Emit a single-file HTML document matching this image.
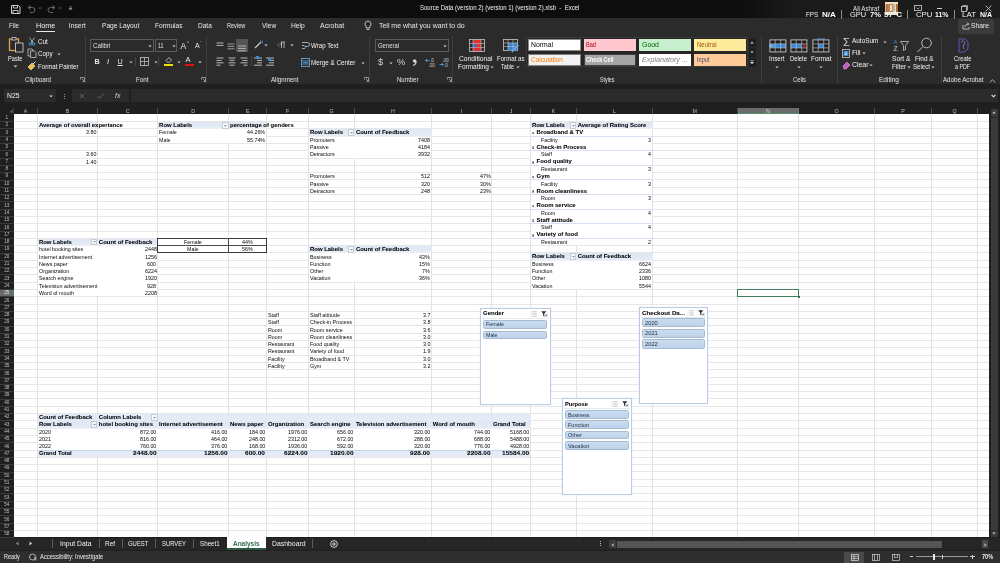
<!DOCTYPE html>
<html><head><meta charset="utf-8"><style>
html,body{margin:0;padding:0;width:1000px;height:563px;overflow:hidden;background:#2b2b2b;position:relative}
.a{position:absolute;box-sizing:border-box}
.t{white-space:pre;line-height:10px;font-family:"Liberation Sans",sans-serif;transform-origin:0 0}
svg.a{overflow:visible}
</style></head><body>
<div class="a" style="left:0.00px;top:0.00px;width:1000.00px;height:18.00px;background:#0d0d0d;"></div>
<div class="a" style="left:740.00px;top:0.00px;width:260.00px;height:18.00px;background:linear-gradient(90deg, rgba(13,13,13,0) 0px, #1a1a1a 50px, #1c1c1c 100%);"></div>
<div class="a" style="left:0.00px;top:18.00px;width:1000.00px;height:66.00px;background:#2b2b2b;"></div>
<div class="a" style="left:0.00px;top:84.00px;width:1000.00px;height:30.00px;background:#1f1f1f;"></div>
<div class="a" style="left:0.00px;top:536.20px;width:1000.00px;height:14.60px;background:#262626;"></div>
<div class="a" style="left:0.00px;top:536.90px;width:1000.00px;height:1.10px;background:#1c1c1c;"></div>
<div class="a" style="left:0.00px;top:549.90px;width:1000.00px;height:0.90px;background:#1f1f1f;"></div>
<div class="a" style="left:0.00px;top:550.80px;width:1000.00px;height:12.20px;background:#2e2e2e;"></div>
<svg class="a" style="left:10px;top:4px" width="11" height="11" viewBox="0 0 11 11"><path d="M1.5 1.5h7l1.5 1.5v6.5h-8.5z" fill="none" stroke="#cfcfcf" stroke-width="1"/><path d="M3.5 1.5v2.5h4v-2.5M3 9.5v-3h5v3" fill="none" stroke="#cfcfcf" stroke-width="0.9"/></svg>
<svg class="a" style="left:25px;top:4px" width="12" height="11" viewBox="0 0 12 11"><path d="M4 3.5h3.5a2.5 2.5 0 0 1 0 5H5" fill="none" stroke="#6a6a6a" stroke-width="1"/><path d="M5.5 1.5L3 3.5l2.5 2" fill="none" stroke="#6a6a6a" stroke-width="1"/></svg>
<svg class="a" style="left:38px;top:7px" width="4" height="3" viewBox="0 0 4 3"><path d="M0.5 1h3" stroke="#6a6a6a" stroke-width="0.8"/></svg>
<svg class="a" style="left:46px;top:4px" width="12" height="11" viewBox="0 0 12 11"><path d="M8 3.5H4.5a2.5 2.5 0 0 0 0 5H7" fill="none" stroke="#6a6a6a" stroke-width="1"/><path d="M6.5 1.5L9 3.5l-2.5 2" fill="none" stroke="#6a6a6a" stroke-width="1"/></svg>
<svg class="a" style="left:58px;top:7px" width="4" height="3" viewBox="0 0 4 3"><path d="M0.5 1h3" stroke="#6a6a6a" stroke-width="0.8"/></svg>
<svg class="a" style="left:68px;top:6px" width="5" height="5" viewBox="0 0 5 5"><path d="M1 1h3M1 2.5L2.5 4 4 2.5z" fill="#8a8a8a" stroke="#8a8a8a" stroke-width="0.8"/></svg>
<div class="a" style="left:885.10px;top:2.10px;width:12.90px;height:12.70px;background:#d9b48a;"></div>
<div class="a" style="left:885.10px;top:2.10px;width:12.90px;height:1.70px;background:#f0e0c8;"></div>
<div class="a" style="left:885.80px;top:4.00px;width:8.20px;height:7.80px;background:linear-gradient(90deg,#b8682e,#c98a50 40%,#8a7a60 70%,#d8c090);"></div>
<div class="a" style="left:889.50px;top:5.00px;width:2.50px;height:5.50px;background:#e8e0d8;"></div>
<div class="a" style="left:894.50px;top:3.80px;width:1.50px;height:8.20px;background:#e8d8a8;"></div>
<div class="a" style="left:896.00px;top:4.00px;width:2.00px;height:7.80px;background:#b06a28;"></div>
<div class="a" style="left:885.10px;top:11.80px;width:12.90px;height:3.00px;background:#ede2d0;"></div>
<div class="a" style="left:841.00px;top:9.50px;width:1.00px;height:9.50px;background:#8a8a8a;"></div>
<div class="a" style="left:907.20px;top:9.50px;width:1.00px;height:9.50px;background:#8a8a8a;"></div>
<div class="a" style="left:954.40px;top:9.50px;width:1.00px;height:9.50px;background:#8a8a8a;"></div>
<svg class="a" style="left:914px;top:5px" width="8" height="6" viewBox="0 0 8 6"><rect x="0.5" y="0.5" width="7" height="5" fill="none" stroke="#cfcfcf" stroke-width="0.8"/><path d="M2.5 2.5l1.5 1.5 1.5-1.5" fill="none" stroke="#cfcfcf" stroke-width="0.7"/></svg>
<div class="a" style="left:937.00px;top:7.50px;width:5.00px;height:0.80px;background:#cfcfcf;"></div>
<svg class="a" style="left:961px;top:4.5px" width="7" height="7" viewBox="0 0 7 7"><rect x="0.5" y="1.5" width="5" height="5" fill="none" stroke="#cfcfcf" stroke-width="0.8"/><path d="M1.8 1.5V0.5h4.7v4.7H5.5" fill="none" stroke="#cfcfcf" stroke-width="0.7"/></svg>
<svg class="a" style="left:985px;top:4.5px" width="7" height="7" viewBox="0 0 7 7"><path d="M0.5 0.5l6 6M6.5 0.5l-6 6" stroke="#cfcfcf" stroke-width="0.8"/></svg>
<div class="a" style="left:35.50px;top:30.60px;width:19.70px;height:1.40px;background:#e8e8e8;border-radius:1px"></div>
<svg class="a" style="left:364px;top:20px" width="8" height="11" viewBox="0 0 8 11"><path d="M4 1a3 3 0 0 0-1.8 5.4V8h3.6V6.4A3 3 0 0 0 4 1z" fill="none" stroke="#d0d0d0" stroke-width="0.9"/><path d="M2.6 9.5h2.8" stroke="#d0d0d0" stroke-width="0.9"/></svg>
<div class="a" style="left:958.00px;top:19.00px;width:35.70px;height:14.60px;background:#3b3b3b;border-radius:2px"></div>
<svg class="a" style="left:962px;top:22px" width="8" height="8" viewBox="0 0 8 8"><path d="M1 3v4h6V5" fill="none" stroke="#cfcfcf" stroke-width="0.8"/><path d="M3 5c0-2 1.5-3 3.5-3M5.2 0.8L6.8 2 5.2 3.4" fill="none" stroke="#cfcfcf" stroke-width="0.8"/></svg>
<div class="a" style="left:85.30px;top:36.00px;width:0.80px;height:47.00px;background:#3d3d3d;"></div>
<div class="a" style="left:205.50px;top:36.00px;width:0.80px;height:47.00px;background:#3d3d3d;"></div>
<div class="a" style="left:369.30px;top:36.00px;width:0.80px;height:47.00px;background:#3d3d3d;"></div>
<div class="a" style="left:452.30px;top:36.00px;width:0.80px;height:47.00px;background:#3d3d3d;"></div>
<div class="a" style="left:761.00px;top:36.00px;width:0.80px;height:47.00px;background:#3d3d3d;"></div>
<div class="a" style="left:837.30px;top:36.00px;width:0.80px;height:47.00px;background:#3d3d3d;"></div>
<div class="a" style="left:940.80px;top:36.00px;width:0.80px;height:47.00px;background:#3d3d3d;"></div>
<svg class="a" style="left:79.5px;top:77px" width="5" height="5" viewBox="0 0 5 5"><path d="M0.5 2.5V0.5h4v4h-2M2 2l2.5 2.5" fill="none" stroke="#bdbdbd" stroke-width="0.7"/></svg>
<svg class="a" style="left:200.5px;top:77px" width="5" height="5" viewBox="0 0 5 5"><path d="M0.5 2.5V0.5h4v4h-2M2 2l2.5 2.5" fill="none" stroke="#bdbdbd" stroke-width="0.7"/></svg>
<svg class="a" style="left:363.5px;top:77px" width="5" height="5" viewBox="0 0 5 5"><path d="M0.5 2.5V0.5h4v4h-2M2 2l2.5 2.5" fill="none" stroke="#bdbdbd" stroke-width="0.7"/></svg>
<svg class="a" style="left:446.5px;top:77px" width="5" height="5" viewBox="0 0 5 5"><path d="M0.5 2.5V0.5h4v4h-2M2 2l2.5 2.5" fill="none" stroke="#bdbdbd" stroke-width="0.7"/></svg>
<svg class="a" style="left:989px;top:79px" width="7" height="4" viewBox="0 0 7 4"><path d="M0.8 3.3L3.5 0.8l2.7 2.5" fill="none" stroke="#d0d0d0" stroke-width="0.8"/></svg>
<svg class="a" style="left:8px;top:36px" width="17" height="17" viewBox="0 0 17 17"><rect x="1.5" y="3" width="9" height="11.5" fill="none" stroke="#e0a050" stroke-width="1.3"/><rect x="4" y="1.5" width="4" height="2.5" fill="#2b2b2b" stroke="#c8c8c8" stroke-width="0.8"/><rect x="7.5" y="7" width="7.5" height="9" fill="#2b2b2b" stroke="#c8c8c8" stroke-width="0.9"/></svg>
<svg class="a" style="left:13px;top:65px" width="5" height="3" viewBox="0 0 5 3"><path d="M0.5 0.5L2.5 2.5 4.5 0.5z" fill="#c8c8c8"/></svg>
<svg class="a" style="left:28px;top:37px" width="8" height="9" viewBox="0 0 8 9"><path d="M1.5 0.5L5 6M6.5 0.5L3 6" stroke="#9fb7c8" stroke-width="0.9"/><circle cx="2.3" cy="7" r="1.3" fill="none" stroke="#3da3d9" stroke-width="0.9"/><circle cx="5.7" cy="7" r="1.3" fill="none" stroke="#3da3d9" stroke-width="0.9"/></svg>
<svg class="a" style="left:27px;top:48px" width="10" height="10" viewBox="0 0 10 10"><path d="M1 1h4l1 1v6H1z" fill="none" stroke="#c8c8c8" stroke-width="0.8"/><path d="M3.5 3h4l1.5 1.5V9.5H3.5z" fill="#2b2b2b" stroke="#c8c8c8" stroke-width="0.8"/></svg>
<svg class="a" style="left:57px;top:53px" width="4" height="3" viewBox="0 0 4 3"><path d="M0.3 0.5L2 2.3 3.7 0.5z" fill="#c8c8c8"/></svg>
<svg class="a" style="left:27px;top:61px" width="10" height="10" viewBox="0 0 10 10"><path d="M1 6l4-4 3 3-4 4z" fill="#f0c040" stroke="#e8e8e8" stroke-width="0.6"/><path d="M6 3l2.5-2.5" stroke="#e8e8e8" stroke-width="1"/></svg>
<div class="a" style="left:90.20px;top:39.10px;width:63.40px;height:12.80px;background:#2b2b2b;border:0.8px solid #5a5a5a"></div>
<svg class="a" style="left:148px;top:44.5px" width="4" height="3" viewBox="0 0 4 3"><path d="M0.3 0.5L2 2.3 3.7 0.5z" fill="#d0d0d0"/></svg>
<div class="a" style="left:155.00px;top:39.10px;width:22.40px;height:12.80px;background:#2b2b2b;border:0.8px solid #5a5a5a"></div>
<svg class="a" style="left:172px;top:44.5px" width="4" height="3" viewBox="0 0 4 3"><path d="M0.3 0.5L2 2.3 3.7 0.5z" fill="#d0d0d0"/></svg>
<svg class="a" style="left:128.5px;top:61px" width="4" height="3" viewBox="0 0 4 3"><path d="M0.3 0.5L2 2.3 3.7 0.5z" fill="#c8c8c8"/></svg>
<svg class="a" style="left:153.5px;top:61px" width="4" height="3" viewBox="0 0 4 3"><path d="M0.3 0.5L2 2.3 3.7 0.5z" fill="#c8c8c8"/></svg>
<svg class="a" style="left:177px;top:61px" width="4" height="3" viewBox="0 0 4 3"><path d="M0.3 0.5L2 2.3 3.7 0.5z" fill="#c8c8c8"/></svg>
<svg class="a" style="left:197.5px;top:61px" width="4" height="3" viewBox="0 0 4 3"><path d="M0.3 0.5L2 2.3 3.7 0.5z" fill="#c8c8c8"/></svg>
<div class="a" style="left:135.00px;top:56.50px;width:0.70px;height:9.50px;background:#444;"></div>
<svg class="a" style="left:140px;top:57px" width="9" height="9" viewBox="0 0 9 9"><rect x="0.5" y="0.5" width="8" height="8" fill="none" stroke="#c8c8c8" stroke-width="0.8"/><path d="M4.5 0.5v8M0.5 4.5h8" stroke="#c8c8c8" stroke-width="0.7"/></svg>
<div class="a" style="left:158.00px;top:56.50px;width:0.70px;height:9.50px;background:#444;"></div>
<svg class="a" style="left:164px;top:55.5px" width="9" height="9" viewBox="0 0 9 9"><path d="M2 4.5L5 1.5 7.5 4 4.5 7z" fill="none" stroke="#d0d0d0" stroke-width="0.8"/></svg>
<div class="a" style="left:163.50px;top:64.30px;width:9.50px;height:1.90px;background:#f0e000;"></div>
<div class="a" style="left:184.50px;top:64.30px;width:9.50px;height:1.90px;background:#e01010;"></div>
<svg class="a" style="left:215.5px;top:41.5px" width="10" height="10" viewBox="0 0 10 10"><path d="M0.5 1.0h7" stroke="#c8c8c8" stroke-width="0.9"/><path d="M0.5 3.4h7" stroke="#c8c8c8" stroke-width="0.9"/></svg>
<svg class="a" style="left:227px;top:43px" width="10" height="10" viewBox="0 0 10 10"><path d="M0.5 1.0h7" stroke="#a8a8a8" stroke-width="0.9"/><path d="M0.5 3.4h7" stroke="#a8a8a8" stroke-width="0.9"/><path d="M0.5 5.8h7" stroke="#a8a8a8" stroke-width="0.9"/></svg>
<div class="a" style="left:236.20px;top:39.10px;width:11.70px;height:12.80px;background:#555555;"></div>
<svg class="a" style="left:238px;top:45px" width="10" height="10" viewBox="0 0 10 10"><path d="M0 1.0h8" stroke="#bdbdbd" stroke-width="0.9"/><path d="M0 3.4h8" stroke="#bdbdbd" stroke-width="0.9"/><path d="M0 5.8h8" stroke="#bdbdbd" stroke-width="0.9"/></svg>
<svg class="a" style="left:215.5px;top:57px" width="10" height="10" viewBox="0 0 10 10"><path d="M0.5 1.0h7" stroke="#c8c8c8" stroke-width="0.9"/><path d="M0.5 3.4h5" stroke="#c8c8c8" stroke-width="0.9"/><path d="M0.5 5.8h7" stroke="#c8c8c8" stroke-width="0.9"/><path d="M0.5 8.2h4" stroke="#c8c8c8" stroke-width="0.9"/></svg>
<svg class="a" style="left:227.5px;top:57px" width="10" height="10" viewBox="0 0 10 10"><path d="M0.5 1.0h7" stroke="#c8c8c8" stroke-width="0.9"/><path d="M1.5 3.4h5" stroke="#c8c8c8" stroke-width="0.9"/><path d="M0.5 5.8h7" stroke="#c8c8c8" stroke-width="0.9"/><path d="M1.5 8.2h5" stroke="#c8c8c8" stroke-width="0.9"/></svg>
<svg class="a" style="left:239.5px;top:57px" width="10" height="10" viewBox="0 0 10 10"><path d="M0.5 1.0h7" stroke="#c8c8c8" stroke-width="0.9"/><path d="M2.5 3.4h5" stroke="#c8c8c8" stroke-width="0.9"/><path d="M0.5 5.8h7" stroke="#c8c8c8" stroke-width="0.9"/><path d="M3.5 8.2h4" stroke="#c8c8c8" stroke-width="0.9"/></svg>
<div class="a" style="left:250.50px;top:56.00px;width:0.70px;height:10.00px;background:#444;"></div>
<svg class="a" style="left:254px;top:57px" width="10" height="10" viewBox="0 0 10 10"><path d="M0 1.0h8" stroke="#c8c8c8" stroke-width="0.9"/><path d="M3 3.4h5" stroke="#c8c8c8" stroke-width="0.9"/><path d="M3 5.8h5" stroke="#c8c8c8" stroke-width="0.9"/><path d="M0 8.2h8" stroke="#c8c8c8" stroke-width="0.9"/></svg>
<svg class="a" style="left:266px;top:57px" width="10" height="10" viewBox="0 0 10 10"><path d="M0 1.0h8" stroke="#c8c8c8" stroke-width="0.9"/><path d="M3 3.4h5" stroke="#c8c8c8" stroke-width="0.9"/><path d="M3 5.8h5" stroke="#c8c8c8" stroke-width="0.9"/><path d="M0 8.2h8" stroke="#c8c8c8" stroke-width="0.9"/></svg>
<div class="a" style="left:255.50px;top:55.80px;width:3.00px;height:3.00px;background:#3a8ad0;"></div>
<div class="a" style="left:267.50px;top:57.50px;width:3.00px;height:3.00px;background:#3a8ad0;"></div>
<svg class="a" style="left:253.5px;top:40px" width="10" height="9" viewBox="0 0 10 9"><path d="M1 8L7 2" stroke="#c8c8c8" stroke-width="1.3"/><path d="M6 1h2.5v2.5" fill="none" stroke="#3a8ad0" stroke-width="0.8"/></svg>
<svg class="a" style="left:264px;top:44px" width="4" height="3" viewBox="0 0 4 3"><path d="M0.3 0.5L2 2.3 3.7 0.5z" fill="#c8c8c8"/></svg>
<svg class="a" style="left:277px;top:41px" width="9" height="8" viewBox="0 0 9 8"><path d="M4.5 1v6M7 1v6M4 1h4M5 1a2 2 0 0 0 0 3.5" fill="none" stroke="#c8c8c8" stroke-width="0.8"/><path d="M0.5 4l2-1.5M0.5 4l2 1.5" stroke="#888" stroke-width="0.7"/></svg>
<svg class="a" style="left:290px;top:44px" width="4" height="3" viewBox="0 0 4 3"><path d="M0.3 0.5L2 2.3 3.7 0.5z" fill="#c8c8c8"/></svg>
<svg class="a" style="left:301px;top:41px" width="9" height="9" viewBox="0 0 9 9"><path d="M1 1.5h5.5a2 2 0 0 1 0 4H4" fill="none" stroke="#c8c8c8" stroke-width="0.8"/><path d="M1 4.5h2M1 7.5h3" stroke="#c8c8c8" stroke-width="0.8"/><path d="M4.5 4L3.5 5.5 4.5 7" fill="none" stroke="#3a8ad0" stroke-width="0.8"/></svg>
<svg class="a" style="left:300.5px;top:57.5px" width="9" height="9" viewBox="0 0 9 9"><rect x="0.5" y="0.5" width="8" height="8" fill="none" stroke="#6fb0e0" stroke-width="0.8"/><path d="M0.5 3h8M0.5 6h8" stroke="#6fb0e0" stroke-width="0.7"/><path d="M2 4.5h5" stroke="#3a8ad0" stroke-width="1.2"/></svg>
<svg class="a" style="left:361px;top:61.5px" width="4" height="3" viewBox="0 0 4 3"><path d="M0.3 0.5L2 2.3 3.7 0.5z" fill="#c8c8c8"/></svg>
<div class="a" style="left:375.20px;top:39.10px;width:73.50px;height:12.80px;background:#2b2b2b;border:0.8px solid #5a5a5a"></div>
<svg class="a" style="left:443px;top:44.5px" width="4" height="3" viewBox="0 0 4 3"><path d="M0.3 0.5L2 2.3 3.7 0.5z" fill="#d0d0d0"/></svg>
<svg class="a" style="left:389px;top:61.5px" width="4" height="3" viewBox="0 0 4 3"><path d="M0.3 0.5L2 2.3 3.7 0.5z" fill="#c8c8c8"/></svg>
<svg class="a" style="left:411.5px;top:58.5px" width="5" height="7" viewBox="0 0 5 7"><circle cx="2.6" cy="2" r="1.7" fill="#d8d8d8"/><path d="M4.2 2.2C4.2 4.5 3 5.8 1 6.5" fill="none" stroke="#d8d8d8" stroke-width="1.1"/></svg>
<svg class="a" style="left:424.5px;top:57px" width="11" height="10" viewBox="0 0 11 10"><path d="M0.5 3.5h4M2 2l-1.5 1.5L2 5" fill="none" stroke="#4a9ae0" stroke-width="0.9"/><text x="5" y="4.8" font-family="Liberation Sans" font-size="4.6" fill="#d0d0d0">.0</text><text x="3.5" y="9.5" font-family="Liberation Sans" font-size="4.6" fill="#d0d0d0">.00</text></svg>
<svg class="a" style="left:438.5px;top:57px" width="11" height="10" viewBox="0 0 11 10"><text x="3.5" y="4.8" font-family="Liberation Sans" font-size="4.6" fill="#d0d0d0">.00</text><path d="M0.5 7.5h4M3 6l1.5 1.5L3 9" fill="none" stroke="#4a9ae0" stroke-width="0.9"/><text x="5" y="9.5" font-family="Liberation Sans" font-size="4.6" fill="#d0d0d0">.0</text></svg>
<svg class="a" style="left:469px;top:38.5px" width="16" height="13" viewBox="0 0 16 13"><rect x="0.5" y="0.5" width="15" height="12" fill="#2b2b2b" stroke="#c8c8c8" stroke-width="0.8"/><rect x="4" y="1" width="8" height="3.5" fill="#e03030"/><rect x="4" y="4.5" width="3" height="3.5" fill="#3a6fd0"/><rect x="7" y="4.5" width="5" height="3.5" fill="#e03030"/><rect x="4" y="8.5" width="8" height="3.5" fill="#e03030"/><path d="M4 0.5v12M12 0.5v12M0.5 4.5h15M0.5 8.5h15" stroke="#c8c8c8" stroke-width="0.6"/></svg>
<svg class="a" style="left:490px;top:66px" width="4" height="3" viewBox="0 0 4 3"><path d="M0.3 0.5L2 2.3 3.7 0.5z" fill="#c8c8c8"/></svg>
<svg class="a" style="left:503px;top:38.5px" width="17" height="14" viewBox="0 0 17 14"><rect x="0.5" y="0.5" width="14" height="11" fill="#2b2b2b" stroke="#c8c8c8" stroke-width="0.8"/><rect x="5" y="4" width="9" height="7.5" fill="#3a7fd0"/><path d="M0.5 4h14M0.5 7.5h14M5 0.5v11M10 0.5v11" stroke="#c8c8c8" stroke-width="0.6"/><path d="M9 13l6.5-7" stroke="#5fb0f0" stroke-width="1.3"/></svg>
<svg class="a" style="left:515.8px;top:66px" width="4" height="3" viewBox="0 0 4 3"><path d="M0.3 0.5L2 2.3 3.7 0.5z" fill="#c8c8c8"/></svg>
<div class="a" style="left:526.00px;top:37.20px;width:222.00px;height:30.00px;background:#262626;border:0.8px solid #3a3a3a"></div>
<div class="a" style="left:528.40px;top:39.10px;width:52.80px;height:12.00px;background:#ffffff;border:1px solid #8a8a8a"></div>
<div class="a" style="left:583.60px;top:39.10px;width:52.30px;height:12.00px;background:#ffc7ce;border:none"></div>
<div class="a" style="left:638.80px;top:39.10px;width:52.10px;height:12.00px;background:#c6efce;border:none"></div>
<div class="a" style="left:694.00px;top:39.10px;width:52.00px;height:12.00px;background:#ffeb9c;border:none"></div>
<div class="a" style="left:528.40px;top:54.00px;width:52.80px;height:11.50px;background:#f2f2f2;border:1px solid #7f7f7f"></div>
<div class="a" style="left:583.60px;top:54.00px;width:52.30px;height:11.50px;background:#a5a5a5;border:1.5px double #3f3f3f"></div>
<div class="a" style="left:638.80px;top:54.00px;width:52.10px;height:11.50px;background:#ffffff;border:none"></div>
<div class="a" style="left:694.00px;top:54.00px;width:52.00px;height:11.50px;background:#ffcc99;border:none"></div>
<div class="a" style="left:748.50px;top:37.50px;width:7.00px;height:9.50px;background:#1f1f1f;"></div>
<div class="a" style="left:748.50px;top:47.50px;width:7.00px;height:9.50px;background:#1f1f1f;"></div>
<div class="a" style="left:748.50px;top:57.50px;width:7.00px;height:9.50px;background:#1f1f1f;"></div>
<svg class="a" style="left:750px;top:40.5px" width="4" height="3" viewBox="0 0 4 3"><path d="M0.3 2.5L2 0.5 3.7 2.5z" fill="#d0d0d0"/></svg>
<svg class="a" style="left:750px;top:51px" width="4" height="3" viewBox="0 0 4 3"><path d="M0.3 0.5L2 2.3 3.7 0.5z" fill="#d0d0d0"/></svg>
<svg class="a" style="left:750px;top:60px" width="4" height="5" viewBox="0 0 4 5"><path d="M0.3 0.5h3.4M0.3 2L2 4 3.7 2z" fill="#d0d0d0" stroke="#d0d0d0" stroke-width="0.5"/></svg>
<svg class="a" style="left:768.5px;top:38.5px" width="18" height="14" viewBox="0 0 18 14"><rect x="0.9" y="0.9" width="16" height="12" fill="#1e1e1e"/><rect x="0.9" y="4.9" width="16" height="4" fill="#2f8ae0"/><path d="M0.3 6.9h4.5M2.3 5.2L0.6 6.9 2.3 8.6" fill="none" stroke="#8fd0ff" stroke-width="0.8"/><rect x="0.9" y="0.9" width="16" height="12" fill="none" stroke="#c8c8c8" stroke-width="0.9"/><path d="M0.9 4.9h16M0.9 8.9h16M6.2 0.9v12M11.7 0.9v12" stroke="#b8b8b8" stroke-width="0.7"/></svg>
<svg class="a" style="left:790px;top:38.5px" width="18" height="14" viewBox="0 0 18 14"><rect x="0.9" y="0.9" width="16" height="12" fill="#1e1e1e"/><rect x="0.9" y="4.9" width="11" height="4" fill="#2f8ae0"/><rect x="0.9" y="0.9" width="16" height="12" fill="none" stroke="#c8c8c8" stroke-width="0.9"/><path d="M0.9 4.9h16M0.9 8.9h16M6.2 0.9v12M11.7 0.9v12" stroke="#b8b8b8" stroke-width="0.7"/><path d="M12.2 4.2l4.2 5.4M16.4 4.2l-4.2 5.4" stroke="#d04040" stroke-width="0.9"/></svg>
<svg class="a" style="left:812px;top:38.5px" width="18" height="14" viewBox="0 0 18 14"><rect x="0.9" y="0.9" width="16" height="12" fill="#1e1e1e"/><rect x="6.2" y="4.9" width="5.5" height="4" fill="#2f8ae0"/><path d="M5 -0.2h8" stroke="#2f8ae0" stroke-width="0.9"/><rect x="0.9" y="0.9" width="16" height="12" fill="none" stroke="#c8c8c8" stroke-width="0.9"/><path d="M0.9 4.9h16M0.9 8.9h16M6.2 0.9v12M11.7 0.9v12" stroke="#b8b8b8" stroke-width="0.7"/></svg>
<svg class="a" style="left:775px;top:66px" width="4" height="3" viewBox="0 0 4 3"><path d="M0.3 0.5L2 2.3 3.7 0.5z" fill="#c8c8c8"/></svg>
<svg class="a" style="left:796.5px;top:66px" width="4" height="3" viewBox="0 0 4 3"><path d="M0.3 0.5L2 2.3 3.7 0.5z" fill="#c8c8c8"/></svg>
<svg class="a" style="left:818.5px;top:66px" width="4" height="3" viewBox="0 0 4 3"><path d="M0.3 0.5L2 2.3 3.7 0.5z" fill="#c8c8c8"/></svg>
<svg class="a" style="left:883px;top:40.5px" width="4" height="3" viewBox="0 0 4 3"><path d="M0.3 0.5L2 2.3 3.7 0.5z" fill="#c8c8c8"/></svg>
<svg class="a" style="left:842px;top:48.5px" width="8" height="9" viewBox="0 0 8 9"><rect x="0.5" y="0.5" width="7" height="8" fill="none" stroke="#c8c8c8" stroke-width="0.8"/><rect x="1.5" y="2" width="5" height="5" fill="#3a8ad0"/><path d="M4 2.5v3.5M2.5 4.5L4 6 5.5 4.5" fill="none" stroke="#fff" stroke-width="0.6"/></svg>
<svg class="a" style="left:862px;top:52px" width="4" height="3" viewBox="0 0 4 3"><path d="M0.3 0.5L2 2.3 3.7 0.5z" fill="#c8c8c8"/></svg>
<svg class="a" style="left:841.5px;top:61px" width="9" height="8" viewBox="0 0 9 8"><path d="M1 5L5 1l3 3-4 4H2z" fill="#c060c0" stroke="#e0a0e0" stroke-width="0.6"/></svg>
<svg class="a" style="left:869px;top:64px" width="4" height="3" viewBox="0 0 4 3"><path d="M0.3 0.5L2 2.3 3.7 0.5z" fill="#c8c8c8"/></svg>
<svg class="a" style="left:892.5px;top:38px" width="17" height="14" viewBox="0 0 17 14"><text x="0.5" y="6" font-family="Liberation Sans" font-size="6" fill="#3a8ad0">A</text><text x="0.5" y="13" font-family="Liberation Sans" font-size="6.5" fill="#d0d0d0">Z</text><path d="M7.5 3.5h8l-3 4v4l-2 1v-5z" fill="none" stroke="#c8c8c8" stroke-width="0.8"/></svg>
<svg class="a" style="left:907px;top:66px" width="4" height="3" viewBox="0 0 4 3"><path d="M0.3 0.5L2 2.3 3.7 0.5z" fill="#c8c8c8"/></svg>
<svg class="a" style="left:915.5px;top:37px" width="17" height="16" viewBox="0 0 17 16"><circle cx="10.5" cy="6" r="4.8" fill="none" stroke="#c8c8c8" stroke-width="0.9"/><path d="M7 9.5L1.5 15" stroke="#c8c8c8" stroke-width="1"/></svg>
<svg class="a" style="left:931px;top:66px" width="4" height="3" viewBox="0 0 4 3"><path d="M0.3 0.5L2 2.3 3.7 0.5z" fill="#c8c8c8"/></svg>
<svg class="a" style="left:954.5px;top:37.5px" width="17" height="15" viewBox="0 0 17 15"><path d="M4 1h6l3 3v7l-4 3H4z" fill="none" stroke="#6a5acd" stroke-width="0.9"/><path d="M6 4.5a2 2 0 1 1 2 2.5l1 4" fill="none" stroke="#8a7ae0" stroke-width="0.8"/></svg>
<div class="a" style="left:3.50px;top:89.10px;width:52.50px;height:13.40px;background:#2b2b2b;"></div>
<svg class="a" style="left:49px;top:94.5px" width="4" height="3" viewBox="0 0 4 3"><path d="M0.3 0.5L2 2.3 3.7 0.5z" fill="#e0e0e0"/></svg>
<div class="a" style="left:63.60px;top:93.50px;width:1.00px;height:1.00px;background:#9a9a9a;"></div>
<div class="a" style="left:63.60px;top:95.50px;width:1.00px;height:1.00px;background:#9a9a9a;"></div>
<div class="a" style="left:63.60px;top:97.50px;width:1.00px;height:1.00px;background:#9a9a9a;"></div>
<div class="a" style="left:72.00px;top:89.10px;width:57.00px;height:13.40px;background:#2b2b2b;"></div>
<svg class="a" style="left:79px;top:93px" width="6" height="6" viewBox="0 0 6 6"><path d="M0.5 0.5l5 5M5.5 0.5l-5 5" stroke="#6a6a6a" stroke-width="0.8"/></svg>
<svg class="a" style="left:96.5px;top:93px" width="7" height="6" viewBox="0 0 7 6"><path d="M0.5 3l2 2.5L6.5 0.5" fill="none" stroke="#6a6a6a" stroke-width="0.8"/></svg>
<div class="a" style="left:131.00px;top:89.10px;width:866.50px;height:13.40px;background:#2b2b2b;"></div>
<svg class="a" style="left:990.5px;top:94.2px" width="5" height="4" viewBox="0 0 5 4"><path d="M0.6 0.8L2.5 2.8 4.4 0.8" fill="none" stroke="#e8e8e8" stroke-width="1.1"/></svg>
<div class="a" style="left:0.00px;top:102.60px;width:989.10px;height:11.20px;background:#1f1f1f;"></div>
<svg class="a" style="left:8.5px;top:108.5px" width="4" height="4" viewBox="0 0 4 4"><path d="M3.5 0.5v3h-3z" fill="#6a6a6a"/></svg>
<div class="a" style="left:737.10px;top:107.90px;width:61.60px;height:5.90px;background:#6b6b6b;"></div>
<div class="a" style="left:737.10px;top:113.00px;width:61.60px;height:0.80px;background:#4f8f6a;"></div>
<div class="a" style="left:37.20px;top:108.00px;width:0.80px;height:5.80px;background:#4a4a4a;"></div>
<div class="a" style="left:97.15px;top:108.00px;width:0.80px;height:5.80px;background:#4a4a4a;"></div>
<div class="a" style="left:157.40px;top:108.00px;width:0.80px;height:5.80px;background:#4a4a4a;"></div>
<div class="a" style="left:228.30px;top:108.00px;width:0.80px;height:5.80px;background:#4a4a4a;"></div>
<div class="a" style="left:266.20px;top:108.00px;width:0.80px;height:5.80px;background:#4a4a4a;"></div>
<div class="a" style="left:308.30px;top:108.00px;width:0.80px;height:5.80px;background:#4a4a4a;"></div>
<div class="a" style="left:354.20px;top:108.00px;width:0.80px;height:5.80px;background:#4a4a4a;"></div>
<div class="a" style="left:431.00px;top:108.00px;width:0.80px;height:5.80px;background:#4a4a4a;"></div>
<div class="a" style="left:491.20px;top:108.00px;width:0.80px;height:5.80px;background:#4a4a4a;"></div>
<div class="a" style="left:530.20px;top:108.00px;width:0.80px;height:5.80px;background:#4a4a4a;"></div>
<div class="a" style="left:576.00px;top:108.00px;width:0.80px;height:5.80px;background:#4a4a4a;"></div>
<div class="a" style="left:652.00px;top:108.00px;width:0.80px;height:5.80px;background:#4a4a4a;"></div>
<div class="a" style="left:736.70px;top:108.00px;width:0.80px;height:5.80px;background:#4a4a4a;"></div>
<div class="a" style="left:798.30px;top:108.00px;width:0.80px;height:5.80px;background:#7a7a7a;"></div>
<div class="a" style="left:874.00px;top:108.00px;width:0.80px;height:5.80px;background:#4a4a4a;"></div>
<div class="a" style="left:931.00px;top:108.00px;width:0.80px;height:5.80px;background:#4a4a4a;"></div>
<div class="a" style="left:977.20px;top:108.00px;width:0.80px;height:5.80px;background:#4a4a4a;"></div>
<div class="a" style="left:988.70px;top:108.00px;width:0.80px;height:5.80px;background:#4a4a4a;"></div>
<div class="a" style="left:13.20px;top:108.00px;width:0.70px;height:5.80px;background:#3a3a3a;"></div>
<div class="a" style="left:0.00px;top:113.80px;width:13.60px;height:423.10px;background:#1f1f1f;"></div>
<div class="a" style="left:0.00px;top:289.40px;width:13.60px;height:7.30px;background:#6b6b6b;"></div>
<div class="a" style="left:12.90px;top:289.40px;width:0.70px;height:7.30px;background:#3f8a5f;"></div>
<div class="a" style="left:0.00px;top:121.15px;width:13.60px;height:0.70px;background:#3a3a3a;"></div>
<div class="a" style="left:0.00px;top:128.45px;width:13.60px;height:0.70px;background:#3a3a3a;"></div>
<div class="a" style="left:0.00px;top:135.75px;width:13.60px;height:0.70px;background:#3a3a3a;"></div>
<div class="a" style="left:0.00px;top:143.05px;width:13.60px;height:0.70px;background:#3a3a3a;"></div>
<div class="a" style="left:0.00px;top:150.35px;width:13.60px;height:0.70px;background:#3a3a3a;"></div>
<div class="a" style="left:0.00px;top:157.65px;width:13.60px;height:0.70px;background:#3a3a3a;"></div>
<div class="a" style="left:0.00px;top:164.95px;width:13.60px;height:0.70px;background:#3a3a3a;"></div>
<div class="a" style="left:0.00px;top:172.25px;width:13.60px;height:0.70px;background:#3a3a3a;"></div>
<div class="a" style="left:0.00px;top:179.55px;width:13.60px;height:0.70px;background:#3a3a3a;"></div>
<div class="a" style="left:0.00px;top:186.85px;width:13.60px;height:0.70px;background:#3a3a3a;"></div>
<div class="a" style="left:0.00px;top:194.15px;width:13.60px;height:0.70px;background:#3a3a3a;"></div>
<div class="a" style="left:0.00px;top:201.45px;width:13.60px;height:0.70px;background:#3a3a3a;"></div>
<div class="a" style="left:0.00px;top:208.75px;width:13.60px;height:0.70px;background:#3a3a3a;"></div>
<div class="a" style="left:0.00px;top:216.05px;width:13.60px;height:0.70px;background:#3a3a3a;"></div>
<div class="a" style="left:0.00px;top:223.35px;width:13.60px;height:0.70px;background:#3a3a3a;"></div>
<div class="a" style="left:0.00px;top:230.65px;width:13.60px;height:0.70px;background:#3a3a3a;"></div>
<div class="a" style="left:0.00px;top:237.95px;width:13.60px;height:0.70px;background:#3a3a3a;"></div>
<div class="a" style="left:0.00px;top:245.25px;width:13.60px;height:0.70px;background:#3a3a3a;"></div>
<div class="a" style="left:0.00px;top:252.55px;width:13.60px;height:0.70px;background:#3a3a3a;"></div>
<div class="a" style="left:0.00px;top:259.85px;width:13.60px;height:0.70px;background:#3a3a3a;"></div>
<div class="a" style="left:0.00px;top:267.15px;width:13.60px;height:0.70px;background:#3a3a3a;"></div>
<div class="a" style="left:0.00px;top:274.45px;width:13.60px;height:0.70px;background:#3a3a3a;"></div>
<div class="a" style="left:0.00px;top:281.75px;width:13.60px;height:0.70px;background:#3a3a3a;"></div>
<div class="a" style="left:0.00px;top:289.05px;width:13.60px;height:0.70px;background:#3a3a3a;"></div>
<div class="a" style="left:0.00px;top:296.35px;width:13.60px;height:0.70px;background:#3a3a3a;"></div>
<div class="a" style="left:0.00px;top:303.65px;width:13.60px;height:0.70px;background:#3a3a3a;"></div>
<div class="a" style="left:0.00px;top:310.95px;width:13.60px;height:0.70px;background:#3a3a3a;"></div>
<div class="a" style="left:0.00px;top:318.25px;width:13.60px;height:0.70px;background:#3a3a3a;"></div>
<div class="a" style="left:0.00px;top:325.55px;width:13.60px;height:0.70px;background:#3a3a3a;"></div>
<div class="a" style="left:0.00px;top:332.85px;width:13.60px;height:0.70px;background:#3a3a3a;"></div>
<div class="a" style="left:0.00px;top:340.15px;width:13.60px;height:0.70px;background:#3a3a3a;"></div>
<div class="a" style="left:0.00px;top:347.45px;width:13.60px;height:0.70px;background:#3a3a3a;"></div>
<div class="a" style="left:0.00px;top:354.75px;width:13.60px;height:0.70px;background:#3a3a3a;"></div>
<div class="a" style="left:0.00px;top:362.05px;width:13.60px;height:0.70px;background:#3a3a3a;"></div>
<div class="a" style="left:0.00px;top:369.35px;width:13.60px;height:0.70px;background:#3a3a3a;"></div>
<div class="a" style="left:0.00px;top:376.65px;width:13.60px;height:0.70px;background:#3a3a3a;"></div>
<div class="a" style="left:0.00px;top:383.95px;width:13.60px;height:0.70px;background:#3a3a3a;"></div>
<div class="a" style="left:0.00px;top:391.25px;width:13.60px;height:0.70px;background:#3a3a3a;"></div>
<div class="a" style="left:0.00px;top:398.55px;width:13.60px;height:0.70px;background:#3a3a3a;"></div>
<div class="a" style="left:0.00px;top:405.85px;width:13.60px;height:0.70px;background:#3a3a3a;"></div>
<div class="a" style="left:0.00px;top:413.15px;width:13.60px;height:0.70px;background:#3a3a3a;"></div>
<div class="a" style="left:0.00px;top:420.45px;width:13.60px;height:0.70px;background:#3a3a3a;"></div>
<div class="a" style="left:0.00px;top:427.75px;width:13.60px;height:0.70px;background:#3a3a3a;"></div>
<div class="a" style="left:0.00px;top:435.05px;width:13.60px;height:0.70px;background:#3a3a3a;"></div>
<div class="a" style="left:0.00px;top:442.35px;width:13.60px;height:0.70px;background:#3a3a3a;"></div>
<div class="a" style="left:0.00px;top:449.65px;width:13.60px;height:0.70px;background:#3a3a3a;"></div>
<div class="a" style="left:0.00px;top:456.95px;width:13.60px;height:0.70px;background:#3a3a3a;"></div>
<div class="a" style="left:0.00px;top:464.25px;width:13.60px;height:0.70px;background:#3a3a3a;"></div>
<div class="a" style="left:0.00px;top:471.55px;width:13.60px;height:0.70px;background:#3a3a3a;"></div>
<div class="a" style="left:0.00px;top:478.85px;width:13.60px;height:0.70px;background:#3a3a3a;"></div>
<div class="a" style="left:0.00px;top:486.15px;width:13.60px;height:0.70px;background:#3a3a3a;"></div>
<div class="a" style="left:0.00px;top:493.45px;width:13.60px;height:0.70px;background:#3a3a3a;"></div>
<div class="a" style="left:0.00px;top:500.75px;width:13.60px;height:0.70px;background:#3a3a3a;"></div>
<div class="a" style="left:0.00px;top:508.05px;width:13.60px;height:0.70px;background:#3a3a3a;"></div>
<div class="a" style="left:0.00px;top:515.35px;width:13.60px;height:0.70px;background:#3a3a3a;"></div>
<div class="a" style="left:0.00px;top:522.65px;width:13.60px;height:0.70px;background:#3a3a3a;"></div>
<div class="a" style="left:0.00px;top:529.95px;width:13.60px;height:0.70px;background:#3a3a3a;"></div>
<div class="a" style="left:0.00px;top:537.25px;width:13.60px;height:0.70px;background:#3a3a3a;"></div>
<div class="a" style="left:13.60px;top:113.80px;width:975.50px;height:423.10px;background:#ffffff;"></div>
<div class="a" style="left:13.60px;top:121.05px;width:975.50px;height:0.90px;background:#e7e7e7;"></div>
<div class="a" style="left:13.60px;top:128.35px;width:975.50px;height:0.90px;background:#e7e7e7;"></div>
<div class="a" style="left:13.60px;top:135.65px;width:975.50px;height:0.90px;background:#e7e7e7;"></div>
<div class="a" style="left:13.60px;top:142.95px;width:975.50px;height:0.90px;background:#e7e7e7;"></div>
<div class="a" style="left:13.60px;top:150.25px;width:975.50px;height:0.90px;background:#e7e7e7;"></div>
<div class="a" style="left:13.60px;top:157.55px;width:975.50px;height:0.90px;background:#e7e7e7;"></div>
<div class="a" style="left:13.60px;top:164.85px;width:975.50px;height:0.90px;background:#e7e7e7;"></div>
<div class="a" style="left:13.60px;top:172.15px;width:975.50px;height:0.90px;background:#e7e7e7;"></div>
<div class="a" style="left:13.60px;top:179.45px;width:975.50px;height:0.90px;background:#e7e7e7;"></div>
<div class="a" style="left:13.60px;top:186.75px;width:975.50px;height:0.90px;background:#e7e7e7;"></div>
<div class="a" style="left:13.60px;top:194.05px;width:975.50px;height:0.90px;background:#e7e7e7;"></div>
<div class="a" style="left:13.60px;top:201.35px;width:975.50px;height:0.90px;background:#e7e7e7;"></div>
<div class="a" style="left:13.60px;top:208.65px;width:975.50px;height:0.90px;background:#e7e7e7;"></div>
<div class="a" style="left:13.60px;top:215.95px;width:975.50px;height:0.90px;background:#e7e7e7;"></div>
<div class="a" style="left:13.60px;top:223.25px;width:975.50px;height:0.90px;background:#e7e7e7;"></div>
<div class="a" style="left:13.60px;top:230.55px;width:975.50px;height:0.90px;background:#e7e7e7;"></div>
<div class="a" style="left:13.60px;top:237.85px;width:975.50px;height:0.90px;background:#e7e7e7;"></div>
<div class="a" style="left:13.60px;top:245.15px;width:975.50px;height:0.90px;background:#e7e7e7;"></div>
<div class="a" style="left:13.60px;top:252.45px;width:975.50px;height:0.90px;background:#e7e7e7;"></div>
<div class="a" style="left:13.60px;top:259.75px;width:975.50px;height:0.90px;background:#e7e7e7;"></div>
<div class="a" style="left:13.60px;top:267.05px;width:975.50px;height:0.90px;background:#e7e7e7;"></div>
<div class="a" style="left:13.60px;top:274.35px;width:975.50px;height:0.90px;background:#e7e7e7;"></div>
<div class="a" style="left:13.60px;top:281.65px;width:975.50px;height:0.90px;background:#e7e7e7;"></div>
<div class="a" style="left:13.60px;top:288.95px;width:975.50px;height:0.90px;background:#e7e7e7;"></div>
<div class="a" style="left:13.60px;top:296.25px;width:975.50px;height:0.90px;background:#e7e7e7;"></div>
<div class="a" style="left:13.60px;top:303.55px;width:975.50px;height:0.90px;background:#e7e7e7;"></div>
<div class="a" style="left:13.60px;top:310.85px;width:975.50px;height:0.90px;background:#e7e7e7;"></div>
<div class="a" style="left:13.60px;top:318.15px;width:975.50px;height:0.90px;background:#e7e7e7;"></div>
<div class="a" style="left:13.60px;top:325.45px;width:975.50px;height:0.90px;background:#e7e7e7;"></div>
<div class="a" style="left:13.60px;top:332.75px;width:975.50px;height:0.90px;background:#e7e7e7;"></div>
<div class="a" style="left:13.60px;top:340.05px;width:975.50px;height:0.90px;background:#e7e7e7;"></div>
<div class="a" style="left:13.60px;top:347.35px;width:975.50px;height:0.90px;background:#e7e7e7;"></div>
<div class="a" style="left:13.60px;top:354.65px;width:975.50px;height:0.90px;background:#e7e7e7;"></div>
<div class="a" style="left:13.60px;top:361.95px;width:975.50px;height:0.90px;background:#e7e7e7;"></div>
<div class="a" style="left:13.60px;top:369.25px;width:975.50px;height:0.90px;background:#e7e7e7;"></div>
<div class="a" style="left:13.60px;top:376.55px;width:975.50px;height:0.90px;background:#e7e7e7;"></div>
<div class="a" style="left:13.60px;top:383.85px;width:975.50px;height:0.90px;background:#e7e7e7;"></div>
<div class="a" style="left:13.60px;top:391.15px;width:975.50px;height:0.90px;background:#e7e7e7;"></div>
<div class="a" style="left:13.60px;top:398.45px;width:975.50px;height:0.90px;background:#e7e7e7;"></div>
<div class="a" style="left:13.60px;top:405.75px;width:975.50px;height:0.90px;background:#e7e7e7;"></div>
<div class="a" style="left:13.60px;top:413.05px;width:975.50px;height:0.90px;background:#e7e7e7;"></div>
<div class="a" style="left:13.60px;top:420.35px;width:975.50px;height:0.90px;background:#e7e7e7;"></div>
<div class="a" style="left:13.60px;top:427.65px;width:975.50px;height:0.90px;background:#e7e7e7;"></div>
<div class="a" style="left:13.60px;top:434.95px;width:975.50px;height:0.90px;background:#e7e7e7;"></div>
<div class="a" style="left:13.60px;top:442.25px;width:975.50px;height:0.90px;background:#e7e7e7;"></div>
<div class="a" style="left:13.60px;top:449.55px;width:975.50px;height:0.90px;background:#e7e7e7;"></div>
<div class="a" style="left:13.60px;top:456.85px;width:975.50px;height:0.90px;background:#e7e7e7;"></div>
<div class="a" style="left:13.60px;top:464.15px;width:975.50px;height:0.90px;background:#e7e7e7;"></div>
<div class="a" style="left:13.60px;top:471.45px;width:975.50px;height:0.90px;background:#e7e7e7;"></div>
<div class="a" style="left:13.60px;top:478.75px;width:975.50px;height:0.90px;background:#e7e7e7;"></div>
<div class="a" style="left:13.60px;top:486.05px;width:975.50px;height:0.90px;background:#e7e7e7;"></div>
<div class="a" style="left:13.60px;top:493.35px;width:975.50px;height:0.90px;background:#e7e7e7;"></div>
<div class="a" style="left:13.60px;top:500.65px;width:975.50px;height:0.90px;background:#e7e7e7;"></div>
<div class="a" style="left:13.60px;top:507.95px;width:975.50px;height:0.90px;background:#e7e7e7;"></div>
<div class="a" style="left:13.60px;top:515.25px;width:975.50px;height:0.90px;background:#e7e7e7;"></div>
<div class="a" style="left:13.60px;top:522.55px;width:975.50px;height:0.90px;background:#e7e7e7;"></div>
<div class="a" style="left:13.60px;top:529.85px;width:975.50px;height:0.90px;background:#e7e7e7;"></div>
<div class="a" style="left:37.20px;top:113.80px;width:0.80px;height:423.10px;background:#e3e3e3;"></div>
<div class="a" style="left:97.15px;top:113.80px;width:0.80px;height:423.10px;background:#e3e3e3;"></div>
<div class="a" style="left:157.40px;top:113.80px;width:0.80px;height:423.10px;background:#e3e3e3;"></div>
<div class="a" style="left:228.30px;top:113.80px;width:0.80px;height:423.10px;background:#e3e3e3;"></div>
<div class="a" style="left:266.20px;top:113.80px;width:0.80px;height:423.10px;background:#e3e3e3;"></div>
<div class="a" style="left:308.30px;top:113.80px;width:0.80px;height:423.10px;background:#e3e3e3;"></div>
<div class="a" style="left:354.20px;top:113.80px;width:0.80px;height:423.10px;background:#e3e3e3;"></div>
<div class="a" style="left:431.00px;top:113.80px;width:0.80px;height:423.10px;background:#e3e3e3;"></div>
<div class="a" style="left:491.20px;top:113.80px;width:0.80px;height:423.10px;background:#e3e3e3;"></div>
<div class="a" style="left:530.20px;top:113.80px;width:0.80px;height:423.10px;background:#e3e3e3;"></div>
<div class="a" style="left:576.00px;top:113.80px;width:0.80px;height:423.10px;background:#e3e3e3;"></div>
<div class="a" style="left:652.00px;top:113.80px;width:0.80px;height:423.10px;background:#e3e3e3;"></div>
<div class="a" style="left:736.70px;top:113.80px;width:0.80px;height:423.10px;background:#e3e3e3;"></div>
<div class="a" style="left:798.30px;top:113.80px;width:0.80px;height:423.10px;background:#e3e3e3;"></div>
<div class="a" style="left:874.00px;top:113.80px;width:0.80px;height:423.10px;background:#e3e3e3;"></div>
<div class="a" style="left:931.00px;top:113.80px;width:0.80px;height:423.10px;background:#e3e3e3;"></div>
<div class="a" style="left:977.20px;top:113.80px;width:0.80px;height:423.10px;background:#e3e3e3;"></div>
<div class="a" style="left:38.00px;top:121.90px;width:59.15px;height:6.50px;background:#e3ebf6;background:linear-gradient(#e3ebf6,#eef3fa)"></div>
<div class="a" style="left:158.20px;top:129.20px;width:108.00px;height:13.80px;background:#ffffff;"></div>
<div class="a" style="left:158.20px;top:121.90px;width:108.80px;height:7.40px;background:linear-gradient(180deg,#dfe8f4 0%,#e2eaf5 70%,#edf2f9 100%);"></div>
<div class="a" style="left:221.90px;top:121.90px;width:6.70px;height:6.80px;background:#f7f9fb;border:0.6px solid #c6ccd4"></div>
<svg class="a" style="left:224.10px;top:124.50px" width="3" height="2" viewBox="0 0 3 2"><path d="M0 0h3L1.5 1.8z" fill="#9a9a9a"/></svg>
<div class="a" style="left:309.10px;top:136.50px;width:121.90px;height:21.10px;background:#ffffff;"></div>
<div class="a" style="left:309.10px;top:129.20px;width:122.70px;height:7.40px;background:linear-gradient(180deg,#dfe8f4 0%,#e2eaf5 70%,#edf2f9 100%);"></div>
<div class="a" style="left:347.80px;top:129.20px;width:6.70px;height:6.80px;background:#f7f9fb;border:0.6px solid #c6ccd4"></div>
<svg class="a" style="left:350.00px;top:131.80px" width="3" height="2" viewBox="0 0 3 2"><path d="M0 0h3L1.5 1.8z" fill="#9a9a9a"/></svg>
<div class="a" style="left:531.00px;top:129.20px;width:121.00px;height:116.00px;background:#ffffff;"></div>
<div class="a" style="left:531.00px;top:121.90px;width:121.80px;height:7.40px;background:linear-gradient(180deg,#dfe8f4 0%,#e2eaf5 70%,#edf2f9 100%);"></div>
<div class="a" style="left:569.60px;top:121.90px;width:6.70px;height:6.80px;background:#f7f9fb;border:0.6px solid #c6ccd4"></div>
<svg class="a" style="left:571.80px;top:124.50px" width="3" height="2" viewBox="0 0 3 2"><path d="M0 0h3L1.5 1.8z" fill="#9a9a9a"/></svg>
<div class="a" style="left:531.90px;top:131.80px;width:2.60px;height:2.60px;background:#f0f0f0;border:0.6px solid #a8a8a8"></div>
<div class="a" style="left:532.50px;top:132.95px;width:1.40px;height:0.30px;background:#606060;"></div>
<div class="a" style="left:531.00px;top:135.65px;width:121.80px;height:0.90px;background:#d5e1f0;"></div>
<div class="a" style="left:531.90px;top:146.40px;width:2.60px;height:2.60px;background:#f0f0f0;border:0.6px solid #a8a8a8"></div>
<div class="a" style="left:532.50px;top:147.55px;width:1.40px;height:0.30px;background:#606060;"></div>
<div class="a" style="left:531.00px;top:150.25px;width:121.80px;height:0.90px;background:#d5e1f0;"></div>
<div class="a" style="left:531.90px;top:161.00px;width:2.60px;height:2.60px;background:#f0f0f0;border:0.6px solid #a8a8a8"></div>
<div class="a" style="left:532.50px;top:162.15px;width:1.40px;height:0.30px;background:#606060;"></div>
<div class="a" style="left:531.00px;top:164.85px;width:121.80px;height:0.90px;background:#d5e1f0;"></div>
<div class="a" style="left:531.90px;top:175.60px;width:2.60px;height:2.60px;background:#f0f0f0;border:0.6px solid #a8a8a8"></div>
<div class="a" style="left:532.50px;top:176.75px;width:1.40px;height:0.30px;background:#606060;"></div>
<div class="a" style="left:531.00px;top:179.45px;width:121.80px;height:0.90px;background:#d5e1f0;"></div>
<div class="a" style="left:531.90px;top:190.20px;width:2.60px;height:2.60px;background:#f0f0f0;border:0.6px solid #a8a8a8"></div>
<div class="a" style="left:532.50px;top:191.35px;width:1.40px;height:0.30px;background:#606060;"></div>
<div class="a" style="left:531.00px;top:194.05px;width:121.80px;height:0.90px;background:#d5e1f0;"></div>
<div class="a" style="left:531.90px;top:204.80px;width:2.60px;height:2.60px;background:#f0f0f0;border:0.6px solid #a8a8a8"></div>
<div class="a" style="left:532.50px;top:205.95px;width:1.40px;height:0.30px;background:#606060;"></div>
<div class="a" style="left:531.00px;top:208.65px;width:121.80px;height:0.90px;background:#d5e1f0;"></div>
<div class="a" style="left:531.90px;top:219.40px;width:2.60px;height:2.60px;background:#f0f0f0;border:0.6px solid #a8a8a8"></div>
<div class="a" style="left:532.50px;top:220.55px;width:1.40px;height:0.30px;background:#606060;"></div>
<div class="a" style="left:531.00px;top:223.25px;width:121.80px;height:0.90px;background:#d5e1f0;"></div>
<div class="a" style="left:531.90px;top:234.00px;width:2.60px;height:2.60px;background:#f0f0f0;border:0.6px solid #a8a8a8"></div>
<div class="a" style="left:532.50px;top:235.15px;width:1.40px;height:0.30px;background:#606060;"></div>
<div class="a" style="left:531.00px;top:237.85px;width:121.80px;height:0.90px;background:#d5e1f0;"></div>
<div class="a" style="left:38.00px;top:246.00px;width:119.40px;height:50.30px;background:#ffffff;"></div>
<div class="a" style="left:38.00px;top:238.70px;width:120.20px;height:7.40px;background:linear-gradient(180deg,#dfe8f4 0%,#e2eaf5 70%,#edf2f9 100%);"></div>
<div class="a" style="left:90.75px;top:238.70px;width:6.70px;height:6.80px;background:#f7f9fb;border:0.6px solid #c6ccd4"></div>
<svg class="a" style="left:92.95px;top:241.30px" width="3" height="2" viewBox="0 0 3 2"><path d="M0 0h3L1.5 1.8z" fill="#9a9a9a"/></svg>
<div class="a" style="left:157.45px;top:237.95px;width:109.50px;height:15.30px;background:transparent;border:0.7px solid #3a3a3a"></div>
<div class="a" style="left:157.80px;top:245.25px;width:108.80px;height:0.70px;background:#4a4a4a;"></div>
<div class="a" style="left:228.35px;top:238.30px;width:0.70px;height:14.60px;background:#4a4a4a;"></div>
<div class="a" style="left:309.10px;top:253.30px;width:121.90px;height:28.40px;background:#ffffff;"></div>
<div class="a" style="left:309.10px;top:246.00px;width:122.70px;height:7.40px;background:linear-gradient(180deg,#dfe8f4 0%,#e2eaf5 70%,#edf2f9 100%);"></div>
<div class="a" style="left:347.80px;top:246.00px;width:6.70px;height:6.80px;background:#f7f9fb;border:0.6px solid #c6ccd4"></div>
<svg class="a" style="left:350.00px;top:248.60px" width="3" height="2" viewBox="0 0 3 2"><path d="M0 0h3L1.5 1.8z" fill="#9a9a9a"/></svg>
<div class="a" style="left:531.00px;top:260.60px;width:121.00px;height:28.40px;background:#ffffff;"></div>
<div class="a" style="left:531.00px;top:253.30px;width:121.80px;height:7.40px;background:linear-gradient(180deg,#dfe8f4 0%,#e2eaf5 70%,#edf2f9 100%);"></div>
<div class="a" style="left:569.60px;top:253.30px;width:6.70px;height:6.80px;background:#f7f9fb;border:0.6px solid #c6ccd4"></div>
<svg class="a" style="left:571.80px;top:255.90px" width="3" height="2" viewBox="0 0 3 2"><path d="M0 0h3L1.5 1.8z" fill="#9a9a9a"/></svg>
<div class="a" style="left:38.00px;top:428.50px;width:492.20px;height:21.10px;background:#ffffff;"></div>
<div class="a" style="left:38.00px;top:413.90px;width:493.00px;height:7.40px;background:#e3ebf6;"></div>
<div class="a" style="left:38.00px;top:421.20px;width:493.00px;height:7.40px;background:linear-gradient(180deg,#dfe8f4 0%,#e2eaf5 70%,#edf2f9 100%);"></div>
<div class="a" style="left:151.00px;top:413.90px;width:6.70px;height:6.80px;background:#f7f9fb;border:0.6px solid #c6ccd4"></div>
<svg class="a" style="left:153.20px;top:416.50px" width="3" height="2" viewBox="0 0 3 2"><path d="M0 0h3L1.5 1.8z" fill="#9a9a9a"/></svg>
<div class="a" style="left:90.75px;top:421.20px;width:6.70px;height:6.80px;background:#f7f9fb;border:0.6px solid #c6ccd4"></div>
<svg class="a" style="left:92.95px;top:423.80px" width="3" height="2" viewBox="0 0 3 2"><path d="M0 0h3L1.5 1.8z" fill="#9a9a9a"/></svg>
<div class="a" style="left:38.00px;top:450.40px;width:492.20px;height:6.50px;background:#e3ebf6;border-top:0.9px solid #c3d5ea"></div>
<div class="a" style="left:479.50px;top:308.00px;width:71.00px;height:96.50px;background:#ffffff;border:0.7px solid #b9cde4;box-shadow:0 0 1px #d0dcea"></div>
<svg class="a" style="left:529.50px;top:310.60px" width="7" height="6" viewBox="0 0 7 6"><path d="M2.2 0.8h4.5M2.2 3h4.5M2.2 5.2h4.5" stroke="#9a9a9a" stroke-width="0.6"/><path d="M0.2 0.8l0.5 0.5 0.8-0.9M0.2 3l0.5 0.5 0.8-0.9M0.2 5.2l0.5 0.5 0.8-0.9" fill="none" stroke="#b0b0b0" stroke-width="0.4"/></svg>
<svg class="a" style="left:540.50px;top:310.60px" width="7" height="6" viewBox="0 0 7 6"><path d="M0.3 0.3h5L3.2 2.8v2.6l-1-0.6V2.8z" fill="#2a2a2a"/><path d="M4 3.4l2.2 2.2M6.2 3.4L4 5.6" stroke="#3a3a3a" stroke-width="0.7"/></svg>
<div class="a" style="left:482.00px;top:317.60px;width:66.00px;height:0.60px;background:#e3e9f0;"></div>
<div class="a" style="left:483.00px;top:319.50px;width:63.80px;height:9.25px;background:linear-gradient(#c9dcf1,#bed3eb);border:0.6px solid #a6bad2;border-radius:1.6px"></div>
<div class="a" style="left:483.00px;top:330.50px;width:63.80px;height:8.75px;background:linear-gradient(#c9dcf1,#bed3eb);border:0.6px solid #a6bad2;border-radius:1.6px"></div>
<div class="a" style="left:638.90px;top:307.40px;width:69.35px;height:96.85px;background:#ffffff;border:0.7px solid #b9cde4;box-shadow:0 0 1px #d0dcea"></div>
<svg class="a" style="left:687.25px;top:310.00px" width="7" height="6" viewBox="0 0 7 6"><path d="M2.2 0.8h4.5M2.2 3h4.5M2.2 5.2h4.5" stroke="#9a9a9a" stroke-width="0.6"/><path d="M0.2 0.8l0.5 0.5 0.8-0.9M0.2 3l0.5 0.5 0.8-0.9M0.2 5.2l0.5 0.5 0.8-0.9" fill="none" stroke="#b0b0b0" stroke-width="0.4"/></svg>
<svg class="a" style="left:698.25px;top:310.00px" width="7" height="6" viewBox="0 0 7 6"><path d="M0.3 0.3h5L3.2 2.8v2.6l-1-0.6V2.8z" fill="#2a2a2a"/><path d="M4 3.4l2.2 2.2M6.2 3.4L4 5.6" stroke="#3a3a3a" stroke-width="0.7"/></svg>
<div class="a" style="left:641.40px;top:317.00px;width:64.35px;height:0.60px;background:#e3e9f0;"></div>
<div class="a" style="left:642.40px;top:318.10px;width:62.15px;height:9.40px;background:linear-gradient(#c9dcf1,#bed3eb);border:0.6px solid #a6bad2;border-radius:1.6px"></div>
<div class="a" style="left:642.40px;top:328.50px;width:62.15px;height:9.50px;background:linear-gradient(#c9dcf1,#bed3eb);border:0.6px solid #a6bad2;border-radius:1.6px"></div>
<div class="a" style="left:642.40px;top:339.00px;width:62.15px;height:9.50px;background:linear-gradient(#c9dcf1,#bed3eb);border:0.6px solid #a6bad2;border-radius:1.6px"></div>
<div class="a" style="left:561.50px;top:398.40px;width:70.70px;height:96.70px;background:#ffffff;border:0.7px solid #b9cde4;box-shadow:0 0 1px #d0dcea"></div>
<svg class="a" style="left:611.20px;top:401.00px" width="7" height="6" viewBox="0 0 7 6"><path d="M2.2 0.8h4.5M2.2 3h4.5M2.2 5.2h4.5" stroke="#9a9a9a" stroke-width="0.6"/><path d="M0.2 0.8l0.5 0.5 0.8-0.9M0.2 3l0.5 0.5 0.8-0.9M0.2 5.2l0.5 0.5 0.8-0.9" fill="none" stroke="#b0b0b0" stroke-width="0.4"/></svg>
<svg class="a" style="left:622.20px;top:401.00px" width="7" height="6" viewBox="0 0 7 6"><path d="M0.3 0.3h5L3.2 2.8v2.6l-1-0.6V2.8z" fill="#2a2a2a"/><path d="M4 3.4l2.2 2.2M6.2 3.4L4 5.6" stroke="#3a3a3a" stroke-width="0.7"/></svg>
<div class="a" style="left:564.00px;top:408.00px;width:65.70px;height:0.60px;background:#e3e9f0;"></div>
<div class="a" style="left:565.00px;top:410.10px;width:63.50px;height:8.60px;background:linear-gradient(#c9dcf1,#bed3eb);border:0.6px solid #a6bad2;border-radius:1.6px"></div>
<div class="a" style="left:565.00px;top:420.30px;width:63.50px;height:8.80px;background:linear-gradient(#c9dcf1,#bed3eb);border:0.6px solid #a6bad2;border-radius:1.6px"></div>
<div class="a" style="left:565.00px;top:430.60px;width:63.50px;height:8.70px;background:linear-gradient(#c9dcf1,#bed3eb);border:0.6px solid #a6bad2;border-radius:1.6px"></div>
<div class="a" style="left:565.00px;top:441.20px;width:63.50px;height:9.00px;background:linear-gradient(#c9dcf1,#bed3eb);border:0.6px solid #a6bad2;border-radius:1.6px"></div>
<div class="a" style="left:736.50px;top:289.00px;width:62.80px;height:8.20px;background:transparent;border:1.4px solid #3f7f5c"></div>
<div class="a" style="left:797.80px;top:295.80px;width:2.50px;height:2.50px;background:#2f6f4c;"></div>
<div class="a" style="left:989.10px;top:102.60px;width:10.90px;height:434.30px;background:#1f1f1f;"></div>
<div class="a" style="left:990.60px;top:108.90px;width:7.20px;height:428.00px;background:#3a3a3a;"></div>
<svg class="a" style="left:992.2px;top:111px" width="4" height="3" viewBox="0 0 4 3"><path d="M0.3 2.5L2 0.5 3.7 2.5z" fill="#d8d8d8"/></svg>
<div class="a" style="left:990.60px;top:116.50px;width:7.20px;height:0.70px;background:#2a2a2a;"></div>
<div class="a" style="left:990.60px;top:529.80px;width:7.20px;height:0.60px;background:#2a2a2a;"></div>
<svg class="a" style="left:992.2px;top:532px" width="4" height="3" viewBox="0 0 4 3"><path d="M0.3 0.5L2 2.5 3.7 0.5z" fill="#bdbdbd"/></svg>
<svg class="a" style="left:14.5px;top:541px" width="4" height="5" viewBox="0 0 4 5"><path d="M3.5 0.5L0.8 2.5 3.5 4.5z" fill="#8a8a8a"/></svg>
<svg class="a" style="left:28.5px;top:541px" width="4" height="5" viewBox="0 0 4 5"><path d="M0.5 0.5L3.2 2.5 0.5 4.5z" fill="#cfcfcf"/></svg>
<div class="a" style="left:52.30px;top:539.00px;width:0.80px;height:9.00px;background:#5a5a5a;"></div>
<div class="a" style="left:99.00px;top:539.00px;width:0.80px;height:9.00px;background:#5a5a5a;"></div>
<div class="a" style="left:122.30px;top:539.00px;width:0.80px;height:9.00px;background:#5a5a5a;"></div>
<div class="a" style="left:155.20px;top:539.00px;width:0.80px;height:9.00px;background:#5a5a5a;"></div>
<div class="a" style="left:192.80px;top:539.00px;width:0.80px;height:9.00px;background:#5a5a5a;"></div>
<div class="a" style="left:312.20px;top:539.00px;width:0.80px;height:9.00px;background:#5a5a5a;"></div>
<div class="a" style="left:227.10px;top:536.60px;width:38.80px;height:11.70px;background:#ffffff;"></div>
<div class="a" style="left:227.10px;top:548.20px;width:38.80px;height:1.40px;background:#285c40;"></div>
<svg class="a" style="left:330px;top:539.5px" width="8" height="8" viewBox="0 0 8 8"><circle cx="4" cy="4" r="3.4" fill="none" stroke="#e0e0e0" stroke-width="0.9"/><path d="M4 2v4M2 4h4" stroke="#e0e0e0" stroke-width="0.9"/></svg>
<div class="a" style="left:600.00px;top:541.00px;width:1.00px;height:1.00px;background:#bdbdbd;"></div>
<div class="a" style="left:600.00px;top:543.00px;width:1.00px;height:1.00px;background:#bdbdbd;"></div>
<div class="a" style="left:600.00px;top:545.00px;width:1.00px;height:1.00px;background:#bdbdbd;"></div>
<div class="a" style="left:609.00px;top:540.40px;width:379.00px;height:7.60px;background:#262626;"></div>
<div class="a" style="left:609.00px;top:540.40px;width:7.00px;height:7.60px;background:#3c3c3c;"></div>
<svg class="a" style="left:611px;top:542.5px" width="3" height="4" viewBox="0 0 3 4"><path d="M2.5 0.3L0.5 2 2.5 3.7z" fill="#bdbdbd"/></svg>
<div class="a" style="left:616.50px;top:540.80px;width:325.90px;height:6.80px;background:#555555;"></div>
<div class="a" style="left:982.40px;top:540.40px;width:5.60px;height:7.60px;background:#4a4a4a;"></div>
<svg class="a" style="left:984px;top:542.5px" width="3" height="4" viewBox="0 0 3 4"><path d="M0.5 0.3L2.5 2 0.5 3.7z" fill="#bdbdbd"/></svg>
<svg class="a" style="left:28.5px;top:552.5px" width="9" height="8" viewBox="0 0 9 8"><circle cx="3.5" cy="4" r="3" fill="none" stroke="#cfcfcf" stroke-width="0.8"/><path d="M5.5 4.5l2 3M7.5 4.5l-2 3" stroke="#cfcfcf" stroke-width="0.7"/></svg>
<div class="a" style="left:844.00px;top:551.60px;width:20.40px;height:11.40px;background:#4a4a4a;"></div>
<svg class="a" style="left:850.5px;top:553.5px" width="8" height="7" viewBox="0 0 8 7"><rect x="0.5" y="0.5" width="7" height="6" fill="none" stroke="#e0e0e0" stroke-width="0.7"/><path d="M0.5 2.5h7M0.5 4.5h7M3 0.5v6" stroke="#e0e0e0" stroke-width="0.6"/></svg>
<svg class="a" style="left:871.5px;top:553.5px" width="8" height="7" viewBox="0 0 8 7"><rect x="0.5" y="0.5" width="7" height="6" fill="none" stroke="#cfcfcf" stroke-width="0.7"/><path d="M2.5 0.5v6M5.5 0.5v6" stroke="#cfcfcf" stroke-width="0.7"/></svg>
<svg class="a" style="left:892px;top:553.5px" width="8" height="7" viewBox="0 0 8 7"><rect x="0.5" y="0.5" width="7" height="6" fill="none" stroke="#cfcfcf" stroke-width="0.7"/><path d="M2.5 0.5v3h3v-3" fill="none" stroke="#cfcfcf" stroke-width="0.7"/></svg>
<div class="a" style="left:909.50px;top:556.30px;width:3.50px;height:0.80px;background:#cfcfcf;"></div>
<div class="a" style="left:916.00px;top:556.40px;width:52.00px;height:0.70px;background:#9a9a9a;"></div>
<div class="a" style="left:933.00px;top:553.50px;width:2.00px;height:6.50px;background:#e8e8e8;"></div>
<div class="a" style="left:942.00px;top:555.00px;width:0.70px;height:3.50px;background:#cfcfcf;"></div>
<div class="a" style="left:970.00px;top:556.30px;width:4.50px;height:0.80px;background:#cfcfcf;"></div>
<div class="a" style="left:971.85px;top:554.50px;width:0.80px;height:4.50px;background:#cfcfcf;"></div>
<div class="a" style="left:0;top:0;width:1000px;height:563px;will-change:transform">
<div class="a t" style="left:420.00px;top:3.19px;font-size:6.800px;color:#f2f2f2;font-weight:normal;font-style:normal;transform:scaleX(0.8848);">Source Data (version 2) (version 1) (version 2).xlsb  -  Excel</div>
<div class="a t" style="left:853.00px;top:4.29px;font-size:6.400px;color:#e4e4e4;font-weight:normal;font-style:normal;transform:scaleX(0.9691);">Ali Ashraf</div>
<div class="a t" style="left:805.80px;top:9.80px;font-size:7.400px;color:#f2f2f2;font-weight:normal;font-style:normal;transform:scaleX(0.8477);">FPS</div>
<div class="a t" style="left:822.00px;top:9.80px;font-size:7.400px;color:#ffffff;font-weight:bold;font-style:normal;transform:scaleX(1.0828);">N/A</div>
<div class="a t" style="left:849.80px;top:9.80px;font-size:7.400px;color:#f2f2f2;font-weight:normal;font-style:normal;transform:scaleX(1.0102);">GPU</div>
<div class="a t" style="left:870.00px;top:9.80px;font-size:7.400px;color:#ffffff;font-weight:bold;font-style:normal;transform:scaleX(1.0285);">7%</div>
<div class="a t" style="left:884.00px;top:9.80px;font-size:7.400px;color:#f2f2f2;font-weight:bold;font-style:normal;transform:scaleX(1.1068);">57°C</div>
<div class="a t" style="left:915.60px;top:9.80px;font-size:7.400px;color:#f2f2f2;font-weight:normal;font-style:normal;transform:scaleX(1.0496);">CPU</div>
<div class="a t" style="left:935.00px;top:9.80px;font-size:7.400px;color:#ffffff;font-weight:bold;font-style:normal;transform:scaleX(0.9373);">11%</div>
<div class="a t" style="left:961.80px;top:9.80px;font-size:7.400px;color:#f2f2f2;font-weight:normal;font-style:normal;transform:scaleX(1.0904);">LAT</div>
<div class="a t" style="left:979.50px;top:9.80px;font-size:7.400px;color:#ffffff;font-weight:bold;font-style:normal;transform:scaleX(0.9495);">N/A</div>
<div class="a t" style="left:8.75px;top:20.89px;font-size:6.800px;color:#e8e8e8;font-weight:normal;font-style:normal;transform:scaleX(0.9126);">File</div>
<div class="a t" style="left:35.75px;top:20.89px;font-size:6.800px;color:#f0f0f0;font-weight:normal;font-style:normal;transform:scaleX(1.0612);">Home</div>
<div class="a t" style="left:68.75px;top:20.89px;font-size:6.800px;color:#e8e8e8;font-weight:normal;font-style:normal;">Insert</div>
<div class="a t" style="left:101.75px;top:20.89px;font-size:6.800px;color:#e8e8e8;font-weight:normal;font-style:normal;transform:scaleX(0.9755);">Page Layout</div>
<div class="a t" style="left:154.50px;top:20.89px;font-size:6.800px;color:#e8e8e8;font-weight:normal;font-style:normal;transform:scaleX(0.9704);">Formulas</div>
<div class="a t" style="left:197.50px;top:20.89px;font-size:6.800px;color:#e8e8e8;font-weight:normal;font-style:normal;transform:scaleX(0.9573);">Data</div>
<div class="a t" style="left:226.75px;top:20.89px;font-size:6.800px;color:#e8e8e8;font-weight:normal;font-style:normal;transform:scaleX(0.8185);">Review</div>
<div class="a t" style="left:262.00px;top:20.89px;font-size:6.800px;color:#e8e8e8;font-weight:normal;font-style:normal;transform:scaleX(0.9749);">View</div>
<div class="a t" style="left:290.75px;top:20.89px;font-size:6.800px;color:#e8e8e8;font-weight:normal;font-style:normal;transform:scaleX(0.9831);">Help</div>
<div class="a t" style="left:319.50px;top:20.89px;font-size:6.800px;color:#e8e8e8;font-weight:normal;font-style:normal;transform:scaleX(1.0348);">Acrobat</div>
<div class="a t" style="left:379.25px;top:20.89px;font-size:6.800px;color:#e8e8e8;font-weight:normal;font-style:normal;transform:scaleX(1.0219);">Tell me what you want to do</div>
<div class="a t" style="left:970.50px;top:21.29px;font-size:6.400px;color:#e8e8e8;font-weight:normal;font-style:normal;transform:scaleX(1.0539);">Share</div>
<div class="a t" style="left:25.00px;top:74.69px;font-size:6.400px;color:#e4e4e4;font-weight:normal;font-style:normal;transform:scaleX(0.9491);">Clipboard</div>
<div class="a t" style="left:136.00px;top:74.69px;font-size:6.400px;color:#e4e4e4;font-weight:normal;font-style:normal;transform:scaleX(0.9760);">Font</div>
<div class="a t" style="left:271.00px;top:74.69px;font-size:6.400px;color:#e4e4e4;font-weight:normal;font-style:normal;transform:scaleX(0.9663);">Alignment</div>
<div class="a t" style="left:397.00px;top:74.69px;font-size:6.400px;color:#e4e4e4;font-weight:normal;font-style:normal;transform:scaleX(0.9445);">Number</div>
<div class="a t" style="left:600.00px;top:74.69px;font-size:6.400px;color:#e4e4e4;font-weight:normal;font-style:normal;transform:scaleX(0.8319);">Styles</div>
<div class="a t" style="left:792.50px;top:74.69px;font-size:6.400px;color:#e4e4e4;font-weight:normal;font-style:normal;transform:scaleX(0.9139);">Cells</div>
<div class="a t" style="left:878.50px;top:74.69px;font-size:6.400px;color:#e4e4e4;font-weight:normal;font-style:normal;transform:scaleX(1.0220);">Editing</div>
<div class="a t" style="left:942.50px;top:74.69px;font-size:6.400px;color:#e4e4e4;font-weight:normal;font-style:normal;transform:scaleX(0.9646);">Adobe Acrobat</div>
<div class="a t" style="left:8.00px;top:54.29px;font-size:6.400px;color:#f2f2f2;font-weight:normal;font-style:normal;transform:scaleX(0.8860);">Paste</div>
<div class="a t" style="left:37.50px;top:37.29px;font-size:6.400px;color:#f2f2f2;font-weight:normal;font-style:normal;transform:scaleX(0.9839);">Cut</div>
<div class="a t" style="left:37.50px;top:49.39px;font-size:6.400px;color:#f2f2f2;font-weight:normal;font-style:normal;transform:scaleX(0.9705);">Copy</div>
<div class="a t" style="left:37.50px;top:61.79px;font-size:6.400px;color:#f2f2f2;font-weight:normal;font-style:normal;transform:scaleX(0.9569);">Format Painter</div>
<div class="a t" style="left:92.50px;top:40.69px;font-size:6.400px;color:#e0e0e0;font-weight:normal;font-style:normal;transform:scaleX(0.9648);">Calibri</div>
<div class="a t" style="left:157.50px;top:40.69px;font-size:6.400px;color:#e0e0e0;font-weight:normal;font-style:normal;transform:scaleX(0.8278);">11</div>
<div class="a t" style="left:180.50px;top:40.71px;font-size:8.500px;color:#e8e8e8;font-weight:normal;font-style:normal;">A</div>
<div class="a t" style="left:187.00px;top:37.55px;font-size:4.000px;color:#e8e8e8;font-weight:normal;font-style:normal;">^</div>
<div class="a t" style="left:195.00px;top:41.39px;font-size:7.000px;color:#e8e8e8;font-weight:normal;font-style:normal;">A</div>
<div class="a t" style="left:200.00px;top:38.05px;font-size:4.000px;color:#e8e8e8;font-weight:normal;font-style:normal;">ˇ</div>
<div class="a t" style="left:94.50px;top:56.70px;font-size:7.200px;color:#e8e8e8;font-weight:bold;font-style:normal;">B</div>
<div class="a t" style="left:107.00px;top:56.70px;font-size:7.500px;color:#e8e8e8;font-weight:normal;font-style:italic;">I</div>
<div class="a t" style="left:117.50px;top:56.70px;font-size:7.200px;color:#e8e8e8;font-weight:normal;font-style:normal;text-decoration:underline">U</div>
<div class="a t" style="left:185.50px;top:55.30px;font-size:7.500px;color:#e8e8e8;font-weight:normal;font-style:normal;">A</div>
<div class="a t" style="left:310.50px;top:40.69px;font-size:6.400px;color:#f2f2f2;font-weight:normal;font-style:normal;transform:scaleX(0.9624);">Wrap Text</div>
<div class="a t" style="left:310.50px;top:57.59px;font-size:6.400px;color:#f2f2f2;font-weight:normal;font-style:normal;transform:scaleX(0.9851);">Merge &amp; Center</div>
<div class="a t" style="left:377.50px;top:40.69px;font-size:6.400px;color:#e0e0e0;font-weight:normal;font-style:normal;transform:scaleX(0.9223);">General</div>
<div class="a t" style="left:378.20px;top:57.23px;font-size:9.500px;color:#d0d0d0;font-weight:normal;font-style:normal;transform:scaleX(0.9840);">$</div>
<div class="a t" style="left:397.40px;top:57.33px;font-size:9.500px;color:#d0d0d0;font-weight:normal;font-style:normal;transform:scaleX(0.9944);">%</div>
<div class="a t" style="left:459.00px;top:53.69px;font-size:6.400px;color:#f2f2f2;font-weight:normal;font-style:normal;transform:scaleX(1.0462);">Conditional</div>
<div class="a t" style="left:458.00px;top:62.19px;font-size:6.400px;color:#f2f2f2;font-weight:normal;font-style:normal;transform:scaleX(1.0135);">Formatting</div>
<div class="a t" style="left:497.00px;top:53.69px;font-size:6.400px;color:#f2f2f2;font-weight:normal;font-style:normal;transform:scaleX(0.9546);">Format as</div>
<div class="a t" style="left:501.30px;top:62.19px;font-size:6.400px;color:#f2f2f2;font-weight:normal;font-style:normal;transform:scaleX(0.8497);">Table</div>
<div class="a t" style="left:531.20px;top:40.39px;font-size:6.400px;color:#000000;font-weight:normal;font-style:normal;transform:scaleX(1.0667);">Normal</div>
<div class="a t" style="left:586.40px;top:40.39px;font-size:6.400px;color:#9c0006;font-weight:normal;font-style:normal;transform:scaleX(0.8781);">Bad</div>
<div class="a t" style="left:641.60px;top:40.39px;font-size:6.400px;color:#006100;font-weight:normal;font-style:normal;transform:scaleX(1.0858);">Good</div>
<div class="a t" style="left:696.80px;top:40.39px;font-size:6.400px;color:#9c5700;font-weight:normal;font-style:normal;transform:scaleX(0.9451);">Neutral</div>
<div class="a t" style="left:531.20px;top:55.04px;font-size:6.400px;color:#fa7d00;font-weight:normal;font-style:normal;transform:scaleX(1.0106);">Calculation</div>
<div class="a t" style="left:586.40px;top:55.04px;font-size:6.400px;color:#ffffff;font-weight:bold;font-style:normal;transform:scaleX(0.8403);">Check Cell</div>
<div class="a t" style="left:641.60px;top:55.04px;font-size:6.400px;color:#7f7f7f;font-weight:normal;font-style:italic;transform:scaleX(1.1244);">Explanatory ...</div>
<div class="a t" style="left:696.80px;top:55.04px;font-size:6.400px;color:#3f3f76;font-weight:normal;font-style:normal;transform:scaleX(0.8781);">Input</div>
<div class="a t" style="left:769.00px;top:53.69px;font-size:6.400px;color:#f2f2f2;font-weight:normal;font-style:normal;transform:scaleX(0.9683);">Insert</div>
<div class="a t" style="left:790.00px;top:53.69px;font-size:6.400px;color:#f2f2f2;font-weight:normal;font-style:normal;transform:scaleX(0.9189);">Delete</div>
<div class="a t" style="left:810.50px;top:53.69px;font-size:6.400px;color:#f2f2f2;font-weight:normal;font-style:normal;transform:scaleX(1.0114);">Format</div>
<div class="a t" style="left:842.80px;top:36.54px;font-size:10.500px;color:#d0d0d0;font-weight:normal;font-style:normal;transform:scaleX(1.0783);">Σ</div>
<div class="a t" style="left:852.00px;top:36.29px;font-size:6.400px;color:#f2f2f2;font-weight:normal;font-style:normal;transform:scaleX(1.0066);">AutoSum</div>
<div class="a t" style="left:852.00px;top:48.19px;font-size:6.400px;color:#f2f2f2;font-weight:normal;font-style:normal;transform:scaleX(1.0398);">Fill</div>
<div class="a t" style="left:852.00px;top:60.19px;font-size:6.400px;color:#f2f2f2;font-weight:normal;font-style:normal;transform:scaleX(1.0789);">Clear</div>
<div class="a t" style="left:892.00px;top:53.69px;font-size:6.400px;color:#f2f2f2;font-weight:normal;font-style:normal;transform:scaleX(1.0402);">Sort &amp;</div>
<div class="a t" style="left:892.00px;top:62.19px;font-size:6.400px;color:#f2f2f2;font-weight:normal;font-style:normal;transform:scaleX(0.9844);">Filter</div>
<div class="a t" style="left:915.00px;top:53.69px;font-size:6.400px;color:#f2f2f2;font-weight:normal;font-style:normal;">Find &amp;</div>
<div class="a t" style="left:913.00px;top:62.19px;font-size:6.400px;color:#f2f2f2;font-weight:normal;font-style:normal;transform:scaleX(0.9557);">Select</div>
<div class="a t" style="left:954.00px;top:53.69px;font-size:6.400px;color:#f2f2f2;font-weight:normal;font-style:normal;transform:scaleX(0.9110);">Create</div>
<div class="a t" style="left:955.00px;top:62.19px;font-size:6.400px;color:#f2f2f2;font-weight:normal;font-style:normal;transform:scaleX(0.8270);">a PDF</div>
<div class="a t" style="left:6.50px;top:90.89px;font-size:6.400px;color:#f2f2f2;font-weight:normal;font-style:normal;transform:scaleX(1.0646);">N25</div>
<div class="a t" style="left:115.00px;top:90.89px;font-size:7.000px;color:#d0d0d0;font-weight:normal;font-style:italic;">fx</div>
<div class="a t" style="left:23.83px;top:105.67px;font-size:5.300px;color:#bdbdbd;font-weight:normal;font-style:normal;">A</div>
<div class="a t" style="left:65.81px;top:105.67px;font-size:5.300px;color:#bdbdbd;font-weight:normal;font-style:normal;">B</div>
<div class="a t" style="left:125.76px;top:105.67px;font-size:5.300px;color:#bdbdbd;font-weight:normal;font-style:normal;">C</div>
<div class="a t" style="left:191.34px;top:105.67px;font-size:5.300px;color:#bdbdbd;font-weight:normal;font-style:normal;">D</div>
<div class="a t" style="left:245.88px;top:105.67px;font-size:5.300px;color:#bdbdbd;font-weight:normal;font-style:normal;">E</div>
<div class="a t" style="left:286.03px;top:105.67px;font-size:5.300px;color:#bdbdbd;font-weight:normal;font-style:normal;">F</div>
<div class="a t" style="left:329.59px;top:105.67px;font-size:5.300px;color:#bdbdbd;font-weight:normal;font-style:normal;">G</div>
<div class="a t" style="left:391.09px;top:105.67px;font-size:5.300px;color:#bdbdbd;font-weight:normal;font-style:normal;">H</div>
<div class="a t" style="left:460.76px;top:105.67px;font-size:5.300px;color:#bdbdbd;font-weight:normal;font-style:normal;">I</div>
<div class="a t" style="left:509.78px;top:105.67px;font-size:5.300px;color:#bdbdbd;font-weight:normal;font-style:normal;">J</div>
<div class="a t" style="left:551.73px;top:105.67px;font-size:5.300px;color:#bdbdbd;font-weight:normal;font-style:normal;">K</div>
<div class="a t" style="left:612.93px;top:105.67px;font-size:5.300px;color:#bdbdbd;font-weight:normal;font-style:normal;">L</div>
<div class="a t" style="left:692.54px;top:105.67px;font-size:5.300px;color:#bdbdbd;font-weight:normal;font-style:normal;">M</div>
<div class="a t" style="left:765.99px;top:105.67px;font-size:5.300px;color:#d8d8d8;font-weight:normal;font-style:normal;">N</div>
<div class="a t" style="left:834.49px;top:105.67px;font-size:5.300px;color:#bdbdbd;font-weight:normal;font-style:normal;">O</div>
<div class="a t" style="left:901.13px;top:105.67px;font-size:5.300px;color:#bdbdbd;font-weight:normal;font-style:normal;">P</div>
<div class="a t" style="left:952.44px;top:105.67px;font-size:5.300px;color:#bdbdbd;font-weight:normal;font-style:normal;">Q</div>
<div class="a t" style="left:5.49px;top:113.01px;font-size:4.700px;color:#bfbfbf;font-weight:normal;font-style:normal;">1</div>
<div class="a t" style="left:5.49px;top:120.31px;font-size:4.700px;color:#bfbfbf;font-weight:normal;font-style:normal;">2</div>
<div class="a t" style="left:5.49px;top:127.61px;font-size:4.700px;color:#bfbfbf;font-weight:normal;font-style:normal;">3</div>
<div class="a t" style="left:5.49px;top:134.91px;font-size:4.700px;color:#bfbfbf;font-weight:normal;font-style:normal;">4</div>
<div class="a t" style="left:5.49px;top:142.21px;font-size:4.700px;color:#bfbfbf;font-weight:normal;font-style:normal;">5</div>
<div class="a t" style="left:5.49px;top:149.51px;font-size:4.700px;color:#bfbfbf;font-weight:normal;font-style:normal;">6</div>
<div class="a t" style="left:5.49px;top:156.81px;font-size:4.700px;color:#bfbfbf;font-weight:normal;font-style:normal;">7</div>
<div class="a t" style="left:5.49px;top:164.11px;font-size:4.700px;color:#bfbfbf;font-weight:normal;font-style:normal;">8</div>
<div class="a t" style="left:5.49px;top:171.41px;font-size:4.700px;color:#bfbfbf;font-weight:normal;font-style:normal;">9</div>
<div class="a t" style="left:4.19px;top:178.71px;font-size:4.700px;color:#bfbfbf;font-weight:normal;font-style:normal;">10</div>
<div class="a t" style="left:4.36px;top:186.01px;font-size:4.700px;color:#bfbfbf;font-weight:normal;font-style:normal;">11</div>
<div class="a t" style="left:4.19px;top:193.31px;font-size:4.700px;color:#bfbfbf;font-weight:normal;font-style:normal;">12</div>
<div class="a t" style="left:4.19px;top:200.61px;font-size:4.700px;color:#bfbfbf;font-weight:normal;font-style:normal;">13</div>
<div class="a t" style="left:4.19px;top:207.91px;font-size:4.700px;color:#bfbfbf;font-weight:normal;font-style:normal;">14</div>
<div class="a t" style="left:4.19px;top:215.21px;font-size:4.700px;color:#bfbfbf;font-weight:normal;font-style:normal;">15</div>
<div class="a t" style="left:4.19px;top:222.51px;font-size:4.700px;color:#bfbfbf;font-weight:normal;font-style:normal;">16</div>
<div class="a t" style="left:4.19px;top:229.81px;font-size:4.700px;color:#bfbfbf;font-weight:normal;font-style:normal;">17</div>
<div class="a t" style="left:4.19px;top:237.11px;font-size:4.700px;color:#bfbfbf;font-weight:normal;font-style:normal;">18</div>
<div class="a t" style="left:4.19px;top:244.41px;font-size:4.700px;color:#bfbfbf;font-weight:normal;font-style:normal;">19</div>
<div class="a t" style="left:4.19px;top:251.71px;font-size:4.700px;color:#bfbfbf;font-weight:normal;font-style:normal;">20</div>
<div class="a t" style="left:4.19px;top:259.01px;font-size:4.700px;color:#bfbfbf;font-weight:normal;font-style:normal;">21</div>
<div class="a t" style="left:4.19px;top:266.31px;font-size:4.700px;color:#bfbfbf;font-weight:normal;font-style:normal;">22</div>
<div class="a t" style="left:4.19px;top:273.61px;font-size:4.700px;color:#bfbfbf;font-weight:normal;font-style:normal;">23</div>
<div class="a t" style="left:4.19px;top:280.91px;font-size:4.700px;color:#bfbfbf;font-weight:normal;font-style:normal;">24</div>
<div class="a t" style="left:4.19px;top:288.21px;font-size:4.700px;color:#e6e6e6;font-weight:normal;font-style:normal;">25</div>
<div class="a t" style="left:4.19px;top:295.51px;font-size:4.700px;color:#bfbfbf;font-weight:normal;font-style:normal;">26</div>
<div class="a t" style="left:4.19px;top:302.81px;font-size:4.700px;color:#bfbfbf;font-weight:normal;font-style:normal;">27</div>
<div class="a t" style="left:4.19px;top:310.11px;font-size:4.700px;color:#bfbfbf;font-weight:normal;font-style:normal;">28</div>
<div class="a t" style="left:4.19px;top:317.41px;font-size:4.700px;color:#bfbfbf;font-weight:normal;font-style:normal;">29</div>
<div class="a t" style="left:4.19px;top:324.71px;font-size:4.700px;color:#bfbfbf;font-weight:normal;font-style:normal;">30</div>
<div class="a t" style="left:4.19px;top:332.01px;font-size:4.700px;color:#bfbfbf;font-weight:normal;font-style:normal;">31</div>
<div class="a t" style="left:4.19px;top:339.31px;font-size:4.700px;color:#bfbfbf;font-weight:normal;font-style:normal;">32</div>
<div class="a t" style="left:4.19px;top:346.61px;font-size:4.700px;color:#bfbfbf;font-weight:normal;font-style:normal;">33</div>
<div class="a t" style="left:4.19px;top:353.91px;font-size:4.700px;color:#bfbfbf;font-weight:normal;font-style:normal;">34</div>
<div class="a t" style="left:4.19px;top:361.21px;font-size:4.700px;color:#bfbfbf;font-weight:normal;font-style:normal;">35</div>
<div class="a t" style="left:4.19px;top:368.51px;font-size:4.700px;color:#bfbfbf;font-weight:normal;font-style:normal;">36</div>
<div class="a t" style="left:4.19px;top:375.81px;font-size:4.700px;color:#bfbfbf;font-weight:normal;font-style:normal;">37</div>
<div class="a t" style="left:4.19px;top:383.11px;font-size:4.700px;color:#bfbfbf;font-weight:normal;font-style:normal;">38</div>
<div class="a t" style="left:4.19px;top:390.41px;font-size:4.700px;color:#bfbfbf;font-weight:normal;font-style:normal;">39</div>
<div class="a t" style="left:4.19px;top:397.71px;font-size:4.700px;color:#bfbfbf;font-weight:normal;font-style:normal;">40</div>
<div class="a t" style="left:4.19px;top:405.01px;font-size:4.700px;color:#bfbfbf;font-weight:normal;font-style:normal;">41</div>
<div class="a t" style="left:4.19px;top:412.31px;font-size:4.700px;color:#bfbfbf;font-weight:normal;font-style:normal;">42</div>
<div class="a t" style="left:4.19px;top:419.61px;font-size:4.700px;color:#bfbfbf;font-weight:normal;font-style:normal;">43</div>
<div class="a t" style="left:4.19px;top:426.91px;font-size:4.700px;color:#bfbfbf;font-weight:normal;font-style:normal;">44</div>
<div class="a t" style="left:4.19px;top:434.21px;font-size:4.700px;color:#bfbfbf;font-weight:normal;font-style:normal;">45</div>
<div class="a t" style="left:4.19px;top:441.51px;font-size:4.700px;color:#bfbfbf;font-weight:normal;font-style:normal;">46</div>
<div class="a t" style="left:4.19px;top:448.81px;font-size:4.700px;color:#bfbfbf;font-weight:normal;font-style:normal;">47</div>
<div class="a t" style="left:4.19px;top:456.11px;font-size:4.700px;color:#bfbfbf;font-weight:normal;font-style:normal;">48</div>
<div class="a t" style="left:4.19px;top:463.41px;font-size:4.700px;color:#bfbfbf;font-weight:normal;font-style:normal;">49</div>
<div class="a t" style="left:4.19px;top:470.71px;font-size:4.700px;color:#bfbfbf;font-weight:normal;font-style:normal;">50</div>
<div class="a t" style="left:4.19px;top:478.01px;font-size:4.700px;color:#bfbfbf;font-weight:normal;font-style:normal;">51</div>
<div class="a t" style="left:4.19px;top:485.31px;font-size:4.700px;color:#bfbfbf;font-weight:normal;font-style:normal;">52</div>
<div class="a t" style="left:4.19px;top:492.61px;font-size:4.700px;color:#bfbfbf;font-weight:normal;font-style:normal;">53</div>
<div class="a t" style="left:4.19px;top:499.91px;font-size:4.700px;color:#bfbfbf;font-weight:normal;font-style:normal;">54</div>
<div class="a t" style="left:4.19px;top:507.21px;font-size:4.700px;color:#bfbfbf;font-weight:normal;font-style:normal;">55</div>
<div class="a t" style="left:4.19px;top:514.51px;font-size:4.700px;color:#bfbfbf;font-weight:normal;font-style:normal;">56</div>
<div class="a t" style="left:4.19px;top:521.81px;font-size:4.700px;color:#bfbfbf;font-weight:normal;font-style:normal;">57</div>
<div class="a t" style="left:4.19px;top:528.76px;font-size:4.700px;color:#bfbfbf;font-weight:normal;font-style:normal;">58</div>
<div class="a t" style="left:38.90px;top:119.98px;font-size:5.950px;color:#000;font-weight:bold;font-style:normal;-webkit-text-stroke:0.05px #000;">Average of overall experiance</div>
<div class="a t" style="left:85.74px;top:127.40px;font-size:5.600px;color:#0a0a0a;font-weight:normal;font-style:normal;transform:scaleX(0.9550);">3.80</div>
<div class="a t" style="left:85.74px;top:149.30px;font-size:5.600px;color:#0a0a0a;font-weight:normal;font-style:normal;transform:scaleX(0.9550);">3.60</div>
<div class="a t" style="left:85.74px;top:156.60px;font-size:5.600px;color:#0a0a0a;font-weight:normal;font-style:normal;transform:scaleX(0.9550);">1.40</div>
<div class="a t" style="left:159.10px;top:119.98px;font-size:5.950px;color:#000;font-weight:bold;font-style:normal;-webkit-text-stroke:0.05px #000;">Row Labels</div>
<div class="a t" style="left:230.00px;top:119.98px;font-size:5.950px;color:#000;font-weight:bold;font-style:normal;-webkit-text-stroke:0.05px #000;">percentage of genders</div>
<div class="a t" style="left:159.10px;top:127.40px;font-size:5.600px;color:#0a0a0a;font-weight:normal;font-style:normal;transform:scaleX(0.9550);">Female</div>
<div class="a t" style="left:247.06px;top:127.40px;font-size:5.600px;color:#0a0a0a;font-weight:normal;font-style:normal;transform:scaleX(0.9550);">44.26%</div>
<div class="a t" style="left:159.10px;top:134.70px;font-size:5.600px;color:#0a0a0a;font-weight:normal;font-style:normal;transform:scaleX(0.9550);">Male</div>
<div class="a t" style="left:247.06px;top:134.70px;font-size:5.600px;color:#0a0a0a;font-weight:normal;font-style:normal;transform:scaleX(0.9550);">55.74%</div>
<div class="a t" style="left:310.00px;top:127.28px;font-size:5.950px;color:#000;font-weight:bold;font-style:normal;-webkit-text-stroke:0.05px #000;">Row Labels</div>
<div class="a t" style="left:355.90px;top:127.28px;font-size:5.950px;color:#000;font-weight:bold;font-style:normal;-webkit-text-stroke:0.05px #000;">Count of Feedback</div>
<div class="a t" style="left:310.00px;top:134.70px;font-size:5.600px;color:#0a0a0a;font-weight:normal;font-style:normal;transform:scaleX(0.9550);">Promoters</div>
<div class="a t" style="left:418.10px;top:134.70px;font-size:5.600px;color:#0a0a0a;font-weight:normal;font-style:normal;transform:scaleX(0.9550);">7408</div>
<div class="a t" style="left:310.00px;top:142.00px;font-size:5.600px;color:#0a0a0a;font-weight:normal;font-style:normal;transform:scaleX(0.9550);">Passive</div>
<div class="a t" style="left:418.10px;top:142.00px;font-size:5.600px;color:#0a0a0a;font-weight:normal;font-style:normal;transform:scaleX(0.9550);">4184</div>
<div class="a t" style="left:310.00px;top:149.30px;font-size:5.600px;color:#0a0a0a;font-weight:normal;font-style:normal;transform:scaleX(0.9550);">Detractors</div>
<div class="a t" style="left:418.10px;top:149.30px;font-size:5.600px;color:#0a0a0a;font-weight:normal;font-style:normal;transform:scaleX(0.9550);">3932</div>
<div class="a t" style="left:310.00px;top:171.20px;font-size:5.600px;color:#0a0a0a;font-weight:normal;font-style:normal;transform:scaleX(0.9550);">Promoters</div>
<div class="a t" style="left:421.08px;top:171.20px;font-size:5.600px;color:#0a0a0a;font-weight:normal;font-style:normal;transform:scaleX(0.9550);">512</div>
<div class="a t" style="left:479.50px;top:171.20px;font-size:5.600px;color:#0a0a0a;font-weight:normal;font-style:normal;transform:scaleX(0.9550);">47%</div>
<div class="a t" style="left:310.00px;top:178.50px;font-size:5.600px;color:#0a0a0a;font-weight:normal;font-style:normal;transform:scaleX(0.9550);">Passive</div>
<div class="a t" style="left:421.08px;top:178.50px;font-size:5.600px;color:#0a0a0a;font-weight:normal;font-style:normal;transform:scaleX(0.9550);">320</div>
<div class="a t" style="left:479.50px;top:178.50px;font-size:5.600px;color:#0a0a0a;font-weight:normal;font-style:normal;transform:scaleX(0.9550);">30%</div>
<div class="a t" style="left:310.00px;top:185.80px;font-size:5.600px;color:#0a0a0a;font-weight:normal;font-style:normal;transform:scaleX(0.9550);">Detractors</div>
<div class="a t" style="left:421.08px;top:185.80px;font-size:5.600px;color:#0a0a0a;font-weight:normal;font-style:normal;transform:scaleX(0.9550);">248</div>
<div class="a t" style="left:479.50px;top:185.80px;font-size:5.600px;color:#0a0a0a;font-weight:normal;font-style:normal;transform:scaleX(0.9550);">23%</div>
<div class="a t" style="left:531.90px;top:119.98px;font-size:5.950px;color:#000;font-weight:bold;font-style:normal;-webkit-text-stroke:0.05px #000;">Row Labels</div>
<div class="a t" style="left:577.70px;top:119.98px;font-size:5.950px;color:#000;font-weight:bold;font-style:normal;-webkit-text-stroke:0.05px #000;">Average of Rating Score</div>
<div class="a t" style="left:536.60px;top:127.28px;font-size:5.950px;color:#000;font-weight:bold;font-style:normal;-webkit-text-stroke:0.05px #000;">Broadband &amp; TV</div>
<div class="a t" style="left:541.30px;top:134.70px;font-size:5.600px;color:#0a0a0a;font-weight:normal;font-style:normal;transform:scaleX(0.9550);">Facility</div>
<div class="a t" style="left:648.03px;top:134.70px;font-size:5.600px;color:#0a0a0a;font-weight:normal;font-style:normal;transform:scaleX(0.9550);">3</div>
<div class="a t" style="left:536.60px;top:141.88px;font-size:5.950px;color:#000;font-weight:bold;font-style:normal;-webkit-text-stroke:0.05px #000;">Check-in Process</div>
<div class="a t" style="left:541.30px;top:149.30px;font-size:5.600px;color:#0a0a0a;font-weight:normal;font-style:normal;transform:scaleX(0.9550);">Staff</div>
<div class="a t" style="left:648.03px;top:149.30px;font-size:5.600px;color:#0a0a0a;font-weight:normal;font-style:normal;transform:scaleX(0.9550);">4</div>
<div class="a t" style="left:536.60px;top:156.48px;font-size:5.950px;color:#000;font-weight:bold;font-style:normal;-webkit-text-stroke:0.05px #000;">Food quality</div>
<div class="a t" style="left:541.30px;top:163.90px;font-size:5.600px;color:#0a0a0a;font-weight:normal;font-style:normal;transform:scaleX(0.9550);">Restaurant</div>
<div class="a t" style="left:648.03px;top:163.90px;font-size:5.600px;color:#0a0a0a;font-weight:normal;font-style:normal;transform:scaleX(0.9550);">3</div>
<div class="a t" style="left:536.60px;top:171.08px;font-size:5.950px;color:#000;font-weight:bold;font-style:normal;-webkit-text-stroke:0.05px #000;">Gym</div>
<div class="a t" style="left:541.30px;top:178.50px;font-size:5.600px;color:#0a0a0a;font-weight:normal;font-style:normal;transform:scaleX(0.9550);">Facility</div>
<div class="a t" style="left:648.03px;top:178.50px;font-size:5.600px;color:#0a0a0a;font-weight:normal;font-style:normal;transform:scaleX(0.9550);">3</div>
<div class="a t" style="left:536.60px;top:185.68px;font-size:5.950px;color:#000;font-weight:bold;font-style:normal;-webkit-text-stroke:0.05px #000;">Room cleanliness</div>
<div class="a t" style="left:541.30px;top:193.10px;font-size:5.600px;color:#0a0a0a;font-weight:normal;font-style:normal;transform:scaleX(0.9550);">Room</div>
<div class="a t" style="left:648.03px;top:193.10px;font-size:5.600px;color:#0a0a0a;font-weight:normal;font-style:normal;transform:scaleX(0.9550);">3</div>
<div class="a t" style="left:536.60px;top:200.28px;font-size:5.950px;color:#000;font-weight:bold;font-style:normal;-webkit-text-stroke:0.05px #000;">Room service</div>
<div class="a t" style="left:541.30px;top:207.70px;font-size:5.600px;color:#0a0a0a;font-weight:normal;font-style:normal;transform:scaleX(0.9550);">Room</div>
<div class="a t" style="left:648.03px;top:207.70px;font-size:5.600px;color:#0a0a0a;font-weight:normal;font-style:normal;transform:scaleX(0.9550);">4</div>
<div class="a t" style="left:536.60px;top:214.88px;font-size:5.950px;color:#000;font-weight:bold;font-style:normal;-webkit-text-stroke:0.05px #000;">Staff attitude</div>
<div class="a t" style="left:541.30px;top:222.30px;font-size:5.600px;color:#0a0a0a;font-weight:normal;font-style:normal;transform:scaleX(0.9550);">Staff</div>
<div class="a t" style="left:648.03px;top:222.30px;font-size:5.600px;color:#0a0a0a;font-weight:normal;font-style:normal;transform:scaleX(0.9550);">4</div>
<div class="a t" style="left:536.60px;top:229.48px;font-size:5.950px;color:#000;font-weight:bold;font-style:normal;-webkit-text-stroke:0.05px #000;">Variety of food</div>
<div class="a t" style="left:541.30px;top:236.90px;font-size:5.600px;color:#0a0a0a;font-weight:normal;font-style:normal;transform:scaleX(0.9550);">Restaurant</div>
<div class="a t" style="left:648.03px;top:236.90px;font-size:5.600px;color:#0a0a0a;font-weight:normal;font-style:normal;transform:scaleX(0.9550);">2</div>
<div class="a t" style="left:38.90px;top:236.78px;font-size:5.950px;color:#000;font-weight:bold;font-style:normal;-webkit-text-stroke:0.05px #000;">Row Labels</div>
<div class="a t" style="left:98.85px;top:236.78px;font-size:5.950px;color:#000;font-weight:bold;font-style:normal;-webkit-text-stroke:0.05px #000;">Count of Feedback</div>
<div class="a t" style="left:38.90px;top:244.20px;font-size:5.600px;color:#0a0a0a;font-weight:normal;font-style:normal;transform:scaleX(0.9550);">hotel booking sites</div>
<div class="a t" style="left:144.50px;top:244.20px;font-size:5.600px;color:#0a0a0a;font-weight:normal;font-style:normal;transform:scaleX(0.9550);">2448</div>
<div class="a t" style="left:38.90px;top:251.50px;font-size:5.600px;color:#0a0a0a;font-weight:normal;font-style:normal;transform:scaleX(0.9550);">Internet advertisement</div>
<div class="a t" style="left:144.50px;top:251.50px;font-size:5.600px;color:#0a0a0a;font-weight:normal;font-style:normal;transform:scaleX(0.9550);">1256</div>
<div class="a t" style="left:38.90px;top:258.80px;font-size:5.600px;color:#0a0a0a;font-weight:normal;font-style:normal;transform:scaleX(0.9550);">News paper</div>
<div class="a t" style="left:147.48px;top:258.80px;font-size:5.600px;color:#0a0a0a;font-weight:normal;font-style:normal;transform:scaleX(0.9550);">600</div>
<div class="a t" style="left:38.90px;top:266.10px;font-size:5.600px;color:#0a0a0a;font-weight:normal;font-style:normal;transform:scaleX(0.9550);">Organization</div>
<div class="a t" style="left:144.50px;top:266.10px;font-size:5.600px;color:#0a0a0a;font-weight:normal;font-style:normal;transform:scaleX(0.9550);">6224</div>
<div class="a t" style="left:38.90px;top:273.40px;font-size:5.600px;color:#0a0a0a;font-weight:normal;font-style:normal;transform:scaleX(0.9550);">Search engine</div>
<div class="a t" style="left:144.50px;top:273.40px;font-size:5.600px;color:#0a0a0a;font-weight:normal;font-style:normal;transform:scaleX(0.9550);">1920</div>
<div class="a t" style="left:38.90px;top:280.70px;font-size:5.600px;color:#0a0a0a;font-weight:normal;font-style:normal;transform:scaleX(0.9550);">Television advertisement</div>
<div class="a t" style="left:147.48px;top:280.70px;font-size:5.600px;color:#0a0a0a;font-weight:normal;font-style:normal;transform:scaleX(0.9550);">928</div>
<div class="a t" style="left:38.90px;top:288.00px;font-size:5.600px;color:#0a0a0a;font-weight:normal;font-style:normal;transform:scaleX(0.9550);">Word of mouth</div>
<div class="a t" style="left:144.50px;top:288.00px;font-size:5.600px;color:#0a0a0a;font-weight:normal;font-style:normal;transform:scaleX(0.9550);">2208</div>
<div class="a t" style="left:184.33px;top:236.90px;font-size:5.600px;color:#0a0a0a;font-weight:normal;font-style:normal;transform:scaleX(0.9550);">Female</div>
<div class="a t" style="left:242.30px;top:236.90px;font-size:5.600px;color:#0a0a0a;font-weight:normal;font-style:normal;transform:scaleX(0.9550);">44%</div>
<div class="a t" style="left:187.45px;top:244.20px;font-size:5.600px;color:#0a0a0a;font-weight:normal;font-style:normal;transform:scaleX(0.9550);">Male</div>
<div class="a t" style="left:242.30px;top:244.20px;font-size:5.600px;color:#0a0a0a;font-weight:normal;font-style:normal;transform:scaleX(0.9550);">56%</div>
<div class="a t" style="left:310.00px;top:244.08px;font-size:5.950px;color:#000;font-weight:bold;font-style:normal;-webkit-text-stroke:0.05px #000;">Row Labels</div>
<div class="a t" style="left:355.90px;top:244.08px;font-size:5.950px;color:#000;font-weight:bold;font-style:normal;-webkit-text-stroke:0.05px #000;">Count of Feedback</div>
<div class="a t" style="left:310.00px;top:251.50px;font-size:5.600px;color:#0a0a0a;font-weight:normal;font-style:normal;transform:scaleX(0.9550);">Business</div>
<div class="a t" style="left:419.30px;top:251.50px;font-size:5.600px;color:#0a0a0a;font-weight:normal;font-style:normal;transform:scaleX(0.9550);">43%</div>
<div class="a t" style="left:310.00px;top:258.80px;font-size:5.600px;color:#0a0a0a;font-weight:normal;font-style:normal;transform:scaleX(0.9550);">Function</div>
<div class="a t" style="left:419.30px;top:258.80px;font-size:5.600px;color:#0a0a0a;font-weight:normal;font-style:normal;transform:scaleX(0.9550);">15%</div>
<div class="a t" style="left:310.00px;top:266.10px;font-size:5.600px;color:#0a0a0a;font-weight:normal;font-style:normal;transform:scaleX(0.9550);">Other</div>
<div class="a t" style="left:422.27px;top:266.10px;font-size:5.600px;color:#0a0a0a;font-weight:normal;font-style:normal;transform:scaleX(0.9550);">7%</div>
<div class="a t" style="left:310.00px;top:273.40px;font-size:5.600px;color:#0a0a0a;font-weight:normal;font-style:normal;transform:scaleX(0.9550);">Vacation</div>
<div class="a t" style="left:419.30px;top:273.40px;font-size:5.600px;color:#0a0a0a;font-weight:normal;font-style:normal;transform:scaleX(0.9550);">36%</div>
<div class="a t" style="left:531.90px;top:251.38px;font-size:5.950px;color:#000;font-weight:bold;font-style:normal;-webkit-text-stroke:0.05px #000;">Row Labels</div>
<div class="a t" style="left:577.70px;top:251.38px;font-size:5.950px;color:#000;font-weight:bold;font-style:normal;-webkit-text-stroke:0.05px #000;">Count of Feedback</div>
<div class="a t" style="left:531.90px;top:258.80px;font-size:5.600px;color:#0a0a0a;font-weight:normal;font-style:normal;transform:scaleX(0.9550);">Business</div>
<div class="a t" style="left:639.10px;top:258.80px;font-size:5.600px;color:#0a0a0a;font-weight:normal;font-style:normal;transform:scaleX(0.9550);">6624</div>
<div class="a t" style="left:531.90px;top:266.10px;font-size:5.600px;color:#0a0a0a;font-weight:normal;font-style:normal;transform:scaleX(0.9550);">Function</div>
<div class="a t" style="left:639.10px;top:266.10px;font-size:5.600px;color:#0a0a0a;font-weight:normal;font-style:normal;transform:scaleX(0.9550);">2336</div>
<div class="a t" style="left:531.90px;top:273.40px;font-size:5.600px;color:#0a0a0a;font-weight:normal;font-style:normal;transform:scaleX(0.9550);">Other</div>
<div class="a t" style="left:639.10px;top:273.40px;font-size:5.600px;color:#0a0a0a;font-weight:normal;font-style:normal;transform:scaleX(0.9550);">1080</div>
<div class="a t" style="left:531.90px;top:280.70px;font-size:5.600px;color:#0a0a0a;font-weight:normal;font-style:normal;transform:scaleX(0.9550);">Vacation</div>
<div class="a t" style="left:639.10px;top:280.70px;font-size:5.600px;color:#0a0a0a;font-weight:normal;font-style:normal;transform:scaleX(0.9550);">5544</div>
<div class="a t" style="left:267.90px;top:309.90px;font-size:5.600px;color:#0a0a0a;font-weight:normal;font-style:normal;transform:scaleX(0.9550);">Staff</div>
<div class="a t" style="left:310.00px;top:309.90px;font-size:5.600px;color:#0a0a0a;font-weight:normal;font-style:normal;transform:scaleX(0.9550);">Staff attitude</div>
<div class="a t" style="left:422.57px;top:309.90px;font-size:5.600px;color:#0a0a0a;font-weight:normal;font-style:normal;transform:scaleX(0.9550);">3.7</div>
<div class="a t" style="left:267.90px;top:317.20px;font-size:5.600px;color:#0a0a0a;font-weight:normal;font-style:normal;transform:scaleX(0.9550);">Staff</div>
<div class="a t" style="left:310.00px;top:317.20px;font-size:5.600px;color:#0a0a0a;font-weight:normal;font-style:normal;transform:scaleX(0.9550);">Check-in Process</div>
<div class="a t" style="left:422.57px;top:317.20px;font-size:5.600px;color:#0a0a0a;font-weight:normal;font-style:normal;transform:scaleX(0.9550);">3.8</div>
<div class="a t" style="left:267.90px;top:324.50px;font-size:5.600px;color:#0a0a0a;font-weight:normal;font-style:normal;transform:scaleX(0.9550);">Room</div>
<div class="a t" style="left:310.00px;top:324.50px;font-size:5.600px;color:#0a0a0a;font-weight:normal;font-style:normal;transform:scaleX(0.9550);">Room service</div>
<div class="a t" style="left:422.57px;top:324.50px;font-size:5.600px;color:#0a0a0a;font-weight:normal;font-style:normal;transform:scaleX(0.9550);">3.6</div>
<div class="a t" style="left:267.90px;top:331.80px;font-size:5.600px;color:#0a0a0a;font-weight:normal;font-style:normal;transform:scaleX(0.9550);">Room</div>
<div class="a t" style="left:310.00px;top:331.80px;font-size:5.600px;color:#0a0a0a;font-weight:normal;font-style:normal;transform:scaleX(0.9550);">Room cleanliness</div>
<div class="a t" style="left:422.57px;top:331.80px;font-size:5.600px;color:#0a0a0a;font-weight:normal;font-style:normal;transform:scaleX(0.9550);">3.0</div>
<div class="a t" style="left:267.90px;top:339.10px;font-size:5.600px;color:#0a0a0a;font-weight:normal;font-style:normal;transform:scaleX(0.9550);">Restaurant</div>
<div class="a t" style="left:310.00px;top:339.10px;font-size:5.600px;color:#0a0a0a;font-weight:normal;font-style:normal;transform:scaleX(0.9550);">Food quality</div>
<div class="a t" style="left:422.57px;top:339.10px;font-size:5.600px;color:#0a0a0a;font-weight:normal;font-style:normal;transform:scaleX(0.9550);">3.0</div>
<div class="a t" style="left:267.90px;top:346.40px;font-size:5.600px;color:#0a0a0a;font-weight:normal;font-style:normal;transform:scaleX(0.9550);">Restaurant</div>
<div class="a t" style="left:310.00px;top:346.40px;font-size:5.600px;color:#0a0a0a;font-weight:normal;font-style:normal;transform:scaleX(0.9550);">Variety of food</div>
<div class="a t" style="left:422.57px;top:346.40px;font-size:5.600px;color:#0a0a0a;font-weight:normal;font-style:normal;transform:scaleX(0.9550);">1.9</div>
<div class="a t" style="left:267.90px;top:353.70px;font-size:5.600px;color:#0a0a0a;font-weight:normal;font-style:normal;transform:scaleX(0.9550);">Facility</div>
<div class="a t" style="left:310.00px;top:353.70px;font-size:5.600px;color:#0a0a0a;font-weight:normal;font-style:normal;transform:scaleX(0.9550);">Broadband &amp; TV</div>
<div class="a t" style="left:422.57px;top:353.70px;font-size:5.600px;color:#0a0a0a;font-weight:normal;font-style:normal;transform:scaleX(0.9550);">3.0</div>
<div class="a t" style="left:267.90px;top:361.00px;font-size:5.600px;color:#0a0a0a;font-weight:normal;font-style:normal;transform:scaleX(0.9550);">Facility</div>
<div class="a t" style="left:310.00px;top:361.00px;font-size:5.600px;color:#0a0a0a;font-weight:normal;font-style:normal;transform:scaleX(0.9550);">Gym</div>
<div class="a t" style="left:422.57px;top:361.00px;font-size:5.600px;color:#0a0a0a;font-weight:normal;font-style:normal;transform:scaleX(0.9550);">3.2</div>
<div class="a t" style="left:38.90px;top:411.98px;font-size:5.950px;color:#000;font-weight:bold;font-style:normal;-webkit-text-stroke:0.05px #000;">Count of Feedback</div>
<div class="a t" style="left:98.85px;top:411.98px;font-size:5.950px;color:#000;font-weight:bold;font-style:normal;-webkit-text-stroke:0.05px #000;">Column Labels</div>
<div class="a t" style="left:38.90px;top:419.28px;font-size:5.950px;color:#000;font-weight:bold;font-style:normal;-webkit-text-stroke:0.05px #000;">Row Labels</div>
<div class="a t" style="left:98.85px;top:419.28px;font-size:5.950px;color:#000;font-weight:bold;font-style:normal;-webkit-text-stroke:0.05px #000;">hotel booking sites</div>
<div class="a t" style="left:159.10px;top:419.28px;font-size:5.950px;color:#000;font-weight:bold;font-style:normal;-webkit-text-stroke:0.05px #000;">Internet advertisement</div>
<div class="a t" style="left:230.00px;top:419.28px;font-size:5.950px;color:#000;font-weight:bold;font-style:normal;-webkit-text-stroke:0.05px #000;">News paper</div>
<div class="a t" style="left:267.90px;top:419.28px;font-size:5.950px;color:#000;font-weight:bold;font-style:normal;-webkit-text-stroke:0.05px #000;">Organization</div>
<div class="a t" style="left:310.00px;top:419.28px;font-size:5.950px;color:#000;font-weight:bold;font-style:normal;-webkit-text-stroke:0.05px #000;">Search engine</div>
<div class="a t" style="left:355.90px;top:419.28px;font-size:5.950px;color:#000;font-weight:bold;font-style:normal;-webkit-text-stroke:0.05px #000;">Television advertisement</div>
<div class="a t" style="left:432.70px;top:419.28px;font-size:5.950px;color:#000;font-weight:bold;font-style:normal;-webkit-text-stroke:0.05px #000;">Word of mouth</div>
<div class="a t" style="left:492.90px;top:419.28px;font-size:5.950px;color:#000;font-weight:bold;font-style:normal;-webkit-text-stroke:0.05px #000;">Grand Total</div>
<div class="a t" style="left:38.90px;top:426.70px;font-size:5.600px;color:#0a0a0a;font-weight:normal;font-style:normal;transform:scaleX(0.9550);">2020</div>
<div class="a t" style="left:140.04px;top:426.70px;font-size:5.600px;color:#0a0a0a;font-weight:normal;font-style:normal;transform:scaleX(0.9550);">872.00</div>
<div class="a t" style="left:210.94px;top:426.70px;font-size:5.600px;color:#0a0a0a;font-weight:normal;font-style:normal;transform:scaleX(0.9550);">416.00</div>
<div class="a t" style="left:248.84px;top:426.70px;font-size:5.600px;color:#0a0a0a;font-weight:normal;font-style:normal;transform:scaleX(0.9550);">184.00</div>
<div class="a t" style="left:287.97px;top:426.70px;font-size:5.600px;color:#0a0a0a;font-weight:normal;font-style:normal;transform:scaleX(0.9550);">1976.00</div>
<div class="a t" style="left:336.84px;top:426.70px;font-size:5.600px;color:#0a0a0a;font-weight:normal;font-style:normal;transform:scaleX(0.9550);">656.00</div>
<div class="a t" style="left:413.64px;top:426.70px;font-size:5.600px;color:#0a0a0a;font-weight:normal;font-style:normal;transform:scaleX(0.9550);">320.00</div>
<div class="a t" style="left:473.84px;top:426.70px;font-size:5.600px;color:#0a0a0a;font-weight:normal;font-style:normal;transform:scaleX(0.9550);">744.00</div>
<div class="a t" style="left:509.87px;top:426.70px;font-size:5.600px;color:#0a0a0a;font-weight:normal;font-style:normal;transform:scaleX(0.9550);">5168.00</div>
<div class="a t" style="left:38.90px;top:434.00px;font-size:5.600px;color:#0a0a0a;font-weight:normal;font-style:normal;transform:scaleX(0.9550);">2021</div>
<div class="a t" style="left:140.04px;top:434.00px;font-size:5.600px;color:#0a0a0a;font-weight:normal;font-style:normal;transform:scaleX(0.9550);">816.00</div>
<div class="a t" style="left:210.94px;top:434.00px;font-size:5.600px;color:#0a0a0a;font-weight:normal;font-style:normal;transform:scaleX(0.9550);">464.00</div>
<div class="a t" style="left:248.84px;top:434.00px;font-size:5.600px;color:#0a0a0a;font-weight:normal;font-style:normal;transform:scaleX(0.9550);">248.00</div>
<div class="a t" style="left:287.97px;top:434.00px;font-size:5.600px;color:#0a0a0a;font-weight:normal;font-style:normal;transform:scaleX(0.9550);">2312.00</div>
<div class="a t" style="left:336.84px;top:434.00px;font-size:5.600px;color:#0a0a0a;font-weight:normal;font-style:normal;transform:scaleX(0.9550);">672.00</div>
<div class="a t" style="left:413.64px;top:434.00px;font-size:5.600px;color:#0a0a0a;font-weight:normal;font-style:normal;transform:scaleX(0.9550);">288.00</div>
<div class="a t" style="left:473.84px;top:434.00px;font-size:5.600px;color:#0a0a0a;font-weight:normal;font-style:normal;transform:scaleX(0.9550);">688.00</div>
<div class="a t" style="left:509.87px;top:434.00px;font-size:5.600px;color:#0a0a0a;font-weight:normal;font-style:normal;transform:scaleX(0.9550);">5488.00</div>
<div class="a t" style="left:38.90px;top:441.30px;font-size:5.600px;color:#0a0a0a;font-weight:normal;font-style:normal;transform:scaleX(0.9550);">2022</div>
<div class="a t" style="left:140.04px;top:441.30px;font-size:5.600px;color:#0a0a0a;font-weight:normal;font-style:normal;transform:scaleX(0.9550);">760.00</div>
<div class="a t" style="left:210.94px;top:441.30px;font-size:5.600px;color:#0a0a0a;font-weight:normal;font-style:normal;transform:scaleX(0.9550);">376.00</div>
<div class="a t" style="left:248.84px;top:441.30px;font-size:5.600px;color:#0a0a0a;font-weight:normal;font-style:normal;transform:scaleX(0.9550);">168.00</div>
<div class="a t" style="left:287.97px;top:441.30px;font-size:5.600px;color:#0a0a0a;font-weight:normal;font-style:normal;transform:scaleX(0.9550);">1936.00</div>
<div class="a t" style="left:336.84px;top:441.30px;font-size:5.600px;color:#0a0a0a;font-weight:normal;font-style:normal;transform:scaleX(0.9550);">592.00</div>
<div class="a t" style="left:413.64px;top:441.30px;font-size:5.600px;color:#0a0a0a;font-weight:normal;font-style:normal;transform:scaleX(0.9550);">320.00</div>
<div class="a t" style="left:473.84px;top:441.30px;font-size:5.600px;color:#0a0a0a;font-weight:normal;font-style:normal;transform:scaleX(0.9550);">776.00</div>
<div class="a t" style="left:509.87px;top:441.30px;font-size:5.600px;color:#0a0a0a;font-weight:normal;font-style:normal;transform:scaleX(0.9550);">4928.00</div>
<div class="a t" style="left:38.90px;top:448.48px;font-size:5.950px;color:#000;font-weight:bold;font-style:normal;-webkit-text-stroke:0.05px #000;">Grand Total</div>
<div class="a t" style="left:132.74px;top:448.48px;font-size:5.950px;color:#000;font-weight:bold;font-style:normal;transform:scaleX(1.1000);-webkit-text-stroke:0.05px #000;">2448.00</div>
<div class="a t" style="left:203.64px;top:448.48px;font-size:5.950px;color:#000;font-weight:bold;font-style:normal;transform:scaleX(1.1000);-webkit-text-stroke:0.05px #000;">1256.00</div>
<div class="a t" style="left:245.18px;top:448.48px;font-size:5.950px;color:#000;font-weight:bold;font-style:normal;transform:scaleX(1.1000);-webkit-text-stroke:0.05px #000;">600.00</div>
<div class="a t" style="left:283.64px;top:448.48px;font-size:5.950px;color:#000;font-weight:bold;font-style:normal;transform:scaleX(1.1000);-webkit-text-stroke:0.05px #000;">6224.00</div>
<div class="a t" style="left:329.54px;top:448.48px;font-size:5.950px;color:#000;font-weight:bold;font-style:normal;transform:scaleX(1.1000);-webkit-text-stroke:0.05px #000;">1920.00</div>
<div class="a t" style="left:409.98px;top:448.48px;font-size:5.950px;color:#000;font-weight:bold;font-style:normal;transform:scaleX(1.1000);-webkit-text-stroke:0.05px #000;">928.00</div>
<div class="a t" style="left:466.54px;top:448.48px;font-size:5.950px;color:#000;font-weight:bold;font-style:normal;transform:scaleX(1.1000);-webkit-text-stroke:0.05px #000;">2208.00</div>
<div class="a t" style="left:501.90px;top:448.48px;font-size:5.950px;color:#000;font-weight:bold;font-style:normal;transform:scaleX(1.1000);-webkit-text-stroke:0.05px #000;">15584.00</div>
<div class="a t" style="left:482.80px;top:308.48px;font-size:6.100px;color:#000;font-weight:bold;font-style:normal;transform:scaleX(0.9833);-webkit-text-stroke:0.05px #000;">Gender</div>
<div class="a t" style="left:486.00px;top:319.31px;font-size:6.100px;color:#1f2d3d;font-weight:normal;font-style:normal;transform:scaleX(0.8849);">Female</div>
<div class="a t" style="left:486.00px;top:330.06px;font-size:6.100px;color:#1f2d3d;font-weight:normal;font-style:normal;transform:scaleX(0.8698);">Male</div>
<div class="a t" style="left:642.20px;top:307.88px;font-size:6.100px;color:#000;font-weight:bold;font-style:normal;transform:scaleX(1.0149);-webkit-text-stroke:0.05px #000;">Checkout Da...</div>
<div class="a t" style="left:645.40px;top:317.98px;font-size:6.100px;color:#1f2d3d;font-weight:normal;font-style:normal;transform:scaleX(0.9432);">2020</div>
<div class="a t" style="left:645.40px;top:328.43px;font-size:6.100px;color:#1f2d3d;font-weight:normal;font-style:normal;transform:scaleX(0.9432);">2021</div>
<div class="a t" style="left:645.40px;top:338.93px;font-size:6.100px;color:#1f2d3d;font-weight:normal;font-style:normal;transform:scaleX(0.9432);">2022</div>
<div class="a t" style="left:564.80px;top:398.88px;font-size:6.100px;color:#000;font-weight:bold;font-style:normal;transform:scaleX(0.9424);-webkit-text-stroke:0.05px #000;">Purpose</div>
<div class="a t" style="left:568.00px;top:409.58px;font-size:6.100px;color:#1f2d3d;font-weight:normal;font-style:normal;transform:scaleX(0.8686);">Business</div>
<div class="a t" style="left:568.00px;top:419.88px;font-size:6.100px;color:#1f2d3d;font-weight:normal;font-style:normal;transform:scaleX(0.8976);">Function</div>
<div class="a t" style="left:568.00px;top:430.13px;font-size:6.100px;color:#1f2d3d;font-weight:normal;font-style:normal;transform:scaleX(0.9176);">Other</div>
<div class="a t" style="left:568.00px;top:440.88px;font-size:6.100px;color:#1f2d3d;font-weight:normal;font-style:normal;transform:scaleX(0.9233);">Vacation</div>
<div class="a t" style="left:59.50px;top:539.09px;font-size:6.800px;color:#f0f0f0;font-weight:normal;font-style:normal;transform:scaleX(1.0039);">Input Data</div>
<div class="a t" style="left:105.00px;top:539.09px;font-size:6.800px;color:#f0f0f0;font-weight:normal;font-style:normal;transform:scaleX(0.9450);">Ref</div>
<div class="a t" style="left:128.00px;top:539.09px;font-size:6.800px;color:#f0f0f0;font-weight:normal;font-style:normal;transform:scaleX(0.8709);">GUEST</div>
<div class="a t" style="left:162.00px;top:539.09px;font-size:6.800px;color:#f0f0f0;font-weight:normal;font-style:normal;transform:scaleX(0.8620);">SURVEY</div>
<div class="a t" style="left:199.60px;top:539.09px;font-size:6.800px;color:#f0f0f0;font-weight:normal;font-style:normal;transform:scaleX(0.9187);">Sheet1</div>
<div class="a t" style="left:272.40px;top:539.09px;font-size:6.800px;color:#f0f0f0;font-weight:normal;font-style:normal;transform:scaleX(1.0100);">Dashboard</div>
<div class="a t" style="left:233.00px;top:539.09px;font-size:6.800px;color:#2e6e4c;font-weight:bold;font-style:normal;transform:scaleX(0.9510);">Analysis</div>
<div class="a t" style="left:3.85px;top:551.89px;font-size:6.600px;color:#f0f0f0;font-weight:normal;font-style:normal;transform:scaleX(0.8256);">Ready</div>
<div class="a t" style="left:39.90px;top:551.89px;font-size:6.600px;color:#ececec;font-weight:normal;font-style:normal;transform:scaleX(0.8863);">Accessibility: Investigate</div>
<div class="a t" style="left:981.80px;top:552.09px;font-size:6.600px;color:#f0f0f0;font-weight:bold;font-style:normal;transform:scaleX(0.8478);">70%</div>
</div></body></html>
